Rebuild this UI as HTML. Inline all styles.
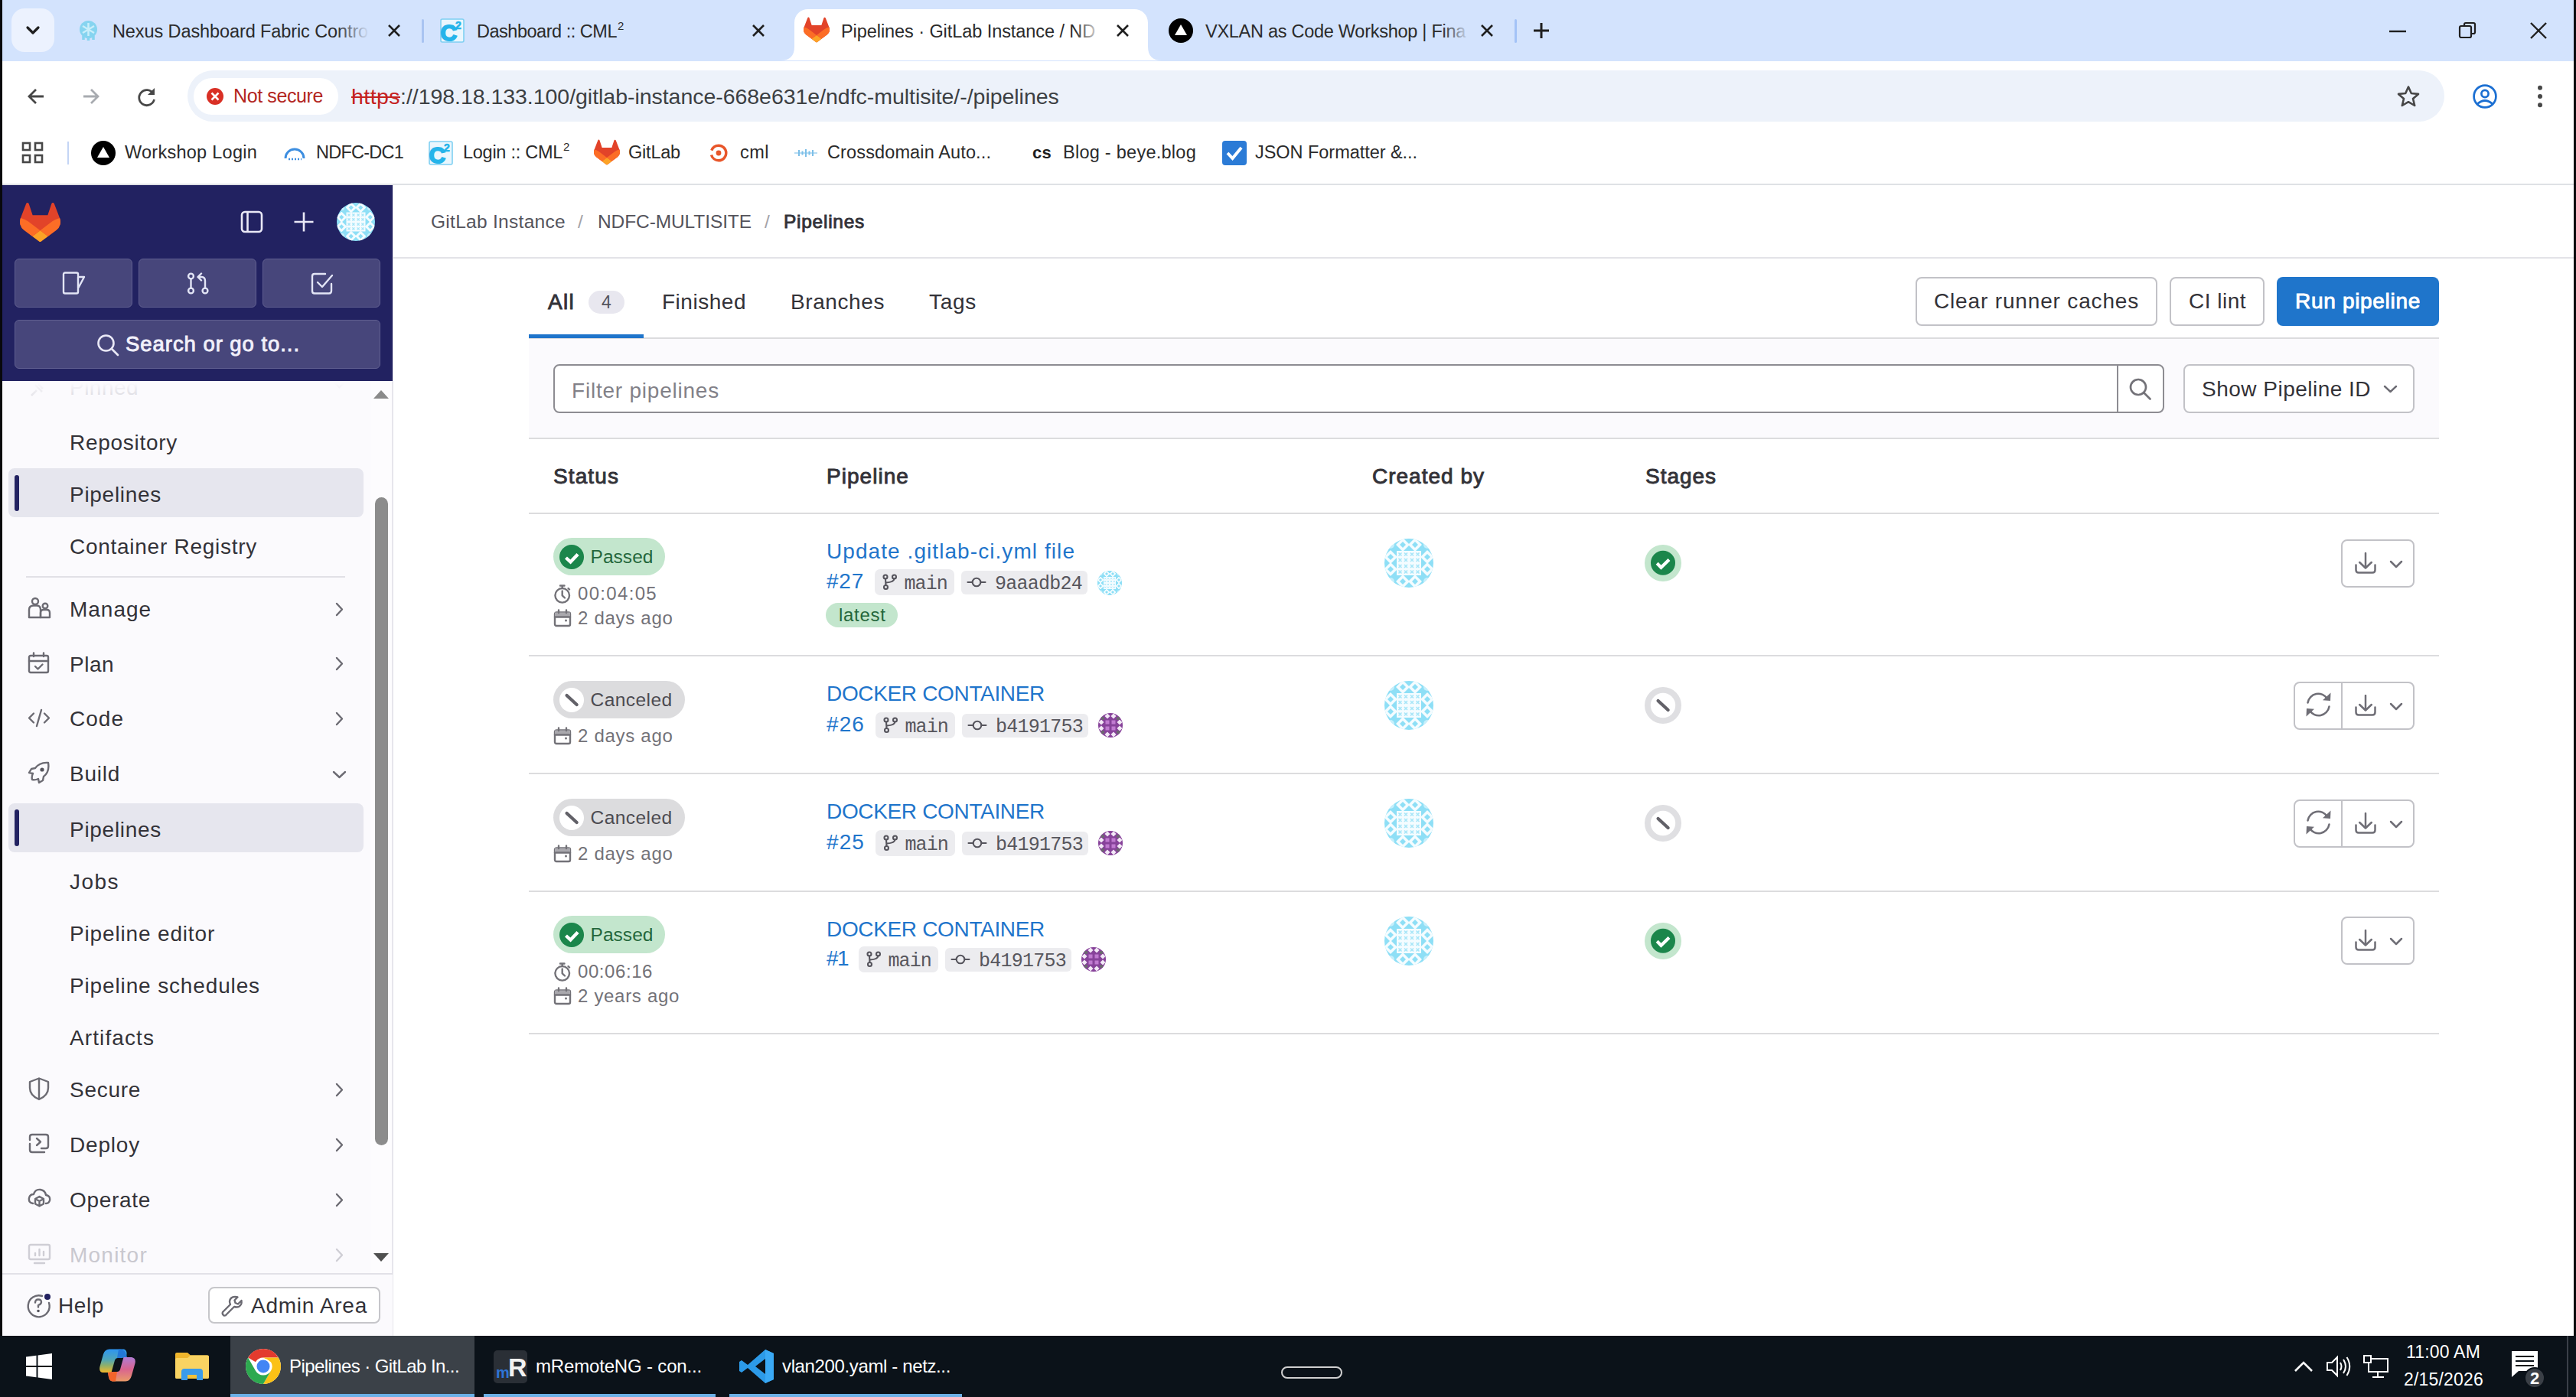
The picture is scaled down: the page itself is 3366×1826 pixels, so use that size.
<!DOCTYPE html>
<html><head><meta charset="utf-8"><title>Pipelines</title>
<style>
html,body{margin:0;padding:0;}
body{width:3366px;height:1826px;position:relative;overflow:hidden;background:#fff;font-family:"Liberation Sans",sans-serif;}
.b{position:absolute;display:block;}
.t{position:absolute;white-space:pre;}
</style></head><body>
<div class="b" style="left:0px;top:0px;width:3366px;height:79.5px;background:#d3e3fd;"></div>
<div class="b" style="left:0px;top:0px;width:3px;height:1746px;background:#08080c;"></div>
<div class="b" style="left:3363px;top:0px;width:3px;height:1746px;background:#08080c;"></div>
<div class="b" style="left:3px;top:79.5px;width:3360px;height:162.5px;background:#fff;border-radius:10px 11px 0 0;"></div>
<div class="b" style="left:15px;top:11px;width:56px;height:57px;background:#ecf2fe;border-radius:17px;"></div>
<svg class="b" style="left:31px;top:30px;" width="24" height="20" viewBox="0 0 24 20"><path d="M5 6 L12 13 L19 6" fill="none" stroke="#1f1f1f" stroke-width="3.2" stroke-linecap="round" stroke-linejoin="round"/></svg>
<svg class="b" style="left:1020px;top:12px" width="500" height="67" viewBox="0 0 500 67"><path d="M0 67 C12 67 18 61 18 49 L18 18 C18 7 26 0 36 0 L462 0 C472 0 480 7 480 18 L480 49 C480 61 486 67 498 67 Z" fill="#fff"/></svg>
<svg class="b" style="left:103px;top:27px;" width="25" height="26" viewBox="0 0 25 26"><circle cx="12.500" cy="11.500" r="11.500" fill="#86d4f0"/><path d="M5 7 L20 16 M20 7 L5 16 M12.500 3 L12.500 20" stroke="#c9eefa" stroke-width="2.500"/><path d="M6 20 L6 25 M12.500 22 L12.500 26 M19 20 L19 25" stroke="#86d4f0" stroke-width="3.500"/></svg>
<div class="t" style="left:147px;top:24.5px;font-size:23.5px;line-height:33px;color:#2b2b2b;letter-spacing:-0.1px;">Nexus Dashboard Fabric Contro</div>
<div class="b" style="left:440px;top:20px;width:50px;height:42px;background:linear-gradient(90deg,rgba(211,227,253,0),#d3e3fd 85%);"></div>
<svg class="b" style="left:506px;top:31px;" width="18" height="18" viewBox="0 0 18 18"><path d="M2 2 L16 16 M16 2 L2 16" fill="none" stroke="#1f1f1f" stroke-width="2.6"/></svg>
<div class="b" style="left:551px;top:25px;width:3px;height:31px;background:#a9c4f2;border-radius:2px;"></div>
<svg class="b" style="left:575px;top:24px;" width="32" height="32" viewBox="0 0 32 32"><rect x="1" y="1" width="30" height="30" rx="2" fill="#eaf6fd" stroke="#7fd0f2" stroke-width="1.600"/><text x="0.500" y="29" font-family="Liberation Sans" font-weight="700" font-size="30" fill="#25b4ea" stroke="#25b4ea" stroke-width="1.800">C</text><text x="20" y="14" font-family="Liberation Sans" font-weight="700" font-size="14" fill="#25b4ea" stroke="#25b4ea" stroke-width="0.600">2</text></svg>
<div class="t" style="left:623px;top:24.5px;font-size:23.5px;line-height:33px;color:#2b2b2b;letter-spacing:-0.48px;">Dashboard :: CML</div>
<div class="t" style="left:807px;top:22.5px;font-size:15px;line-height:21px;color:#2b2b2b;letter-spacing:2.66px;">2</div>
<svg class="b" style="left:982px;top:31px;" width="18" height="18" viewBox="0 0 18 18"><path d="M2 2 L16 16 M16 2 L2 16" fill="none" stroke="#1f1f1f" stroke-width="2.6"/></svg>
<svg class="b" style="left:1050px;top:22px;" width="34" height="34" viewBox="0 0 32 32"><path fill="#e24329" d="m31.46 12.780-.040-.120-4.350-11.350A1.140 1.140 0 0 0 25.940.600c-.240 0-.470.100-.660.240-.190.150-.330.360-.390.600l-2.940 9h-11.900l-2.940-9A1.140 1.140 0 0 0 6.070.580a1.150 1.150 0 0 0-1.140.720L.580 12.680l-.050.110a8.100 8.100 0 0 0 2.680 9.340l.020.010.040.030 6.630 4.970 3.280 2.480 2 1.520a1.350 1.350 0 0 0 1.620 0l2-1.520 3.280-2.480 6.670-5h.020a8.090 8.090 0 0 0 2.700-9.360Z"/><path fill="#fc6d26" d="m31.460 12.780-.040-.120a14.750 14.750 0 0 0-5.860 2.640l-9.550 7.240 6.090 4.600 6.670-5h.020a8.090 8.090 0 0 0 2.670-9.360Z"/><path fill="#fca326" d="m9.900 27.140 3.280 2.480 2 1.520a1.350 1.350 0 0 0 1.620 0l2-1.520 3.280-2.480-6.100-4.600-6.070 4.600Z"/><path fill="#fc6d26" d="M6.440 15.300a14.710 14.710 0 0 0-5.860-2.630l-.050.120a8.100 8.100 0 0 0 2.680 9.340l.020.010.040.030 6.630 4.970 6.100-4.600-9.560-7.240Z"/></svg>
<div class="t" style="left:1099px;top:24.5px;font-size:23.5px;line-height:33px;color:#2b2b2b;letter-spacing:-0.07px;">Pipelines · GitLab Instance / ND</div>
<div class="b" style="left:1405px;top:20px;width:35px;height:42px;background:linear-gradient(90deg,rgba(255,255,255,0),#fff);"></div>
<svg class="b" style="left:1458px;top:31px;" width="18" height="18" viewBox="0 0 18 18"><path d="M2 2 L16 16 M16 2 L2 16" fill="none" stroke="#1f1f1f" stroke-width="2.6"/></svg>
<svg class="b" style="left:1527px;top:24px;" width="32" height="32" viewBox="0 0 32 32"><circle cx="16" cy="16" r="16" fill="#000"/><path d="M16 8 L24 22 L8 22 Z" fill="#fff"/></svg>
<div class="t" style="left:1575px;top:24.5px;font-size:23.5px;line-height:33px;color:#2b2b2b;letter-spacing:-0.27px;">VXLAN as Code Workshop | Fina</div>
<div class="b" style="left:1885px;top:20px;width:35px;height:42px;background:linear-gradient(90deg,rgba(211,227,253,0),#d3e3fd);"></div>
<svg class="b" style="left:1934px;top:31px;" width="18" height="18" viewBox="0 0 18 18"><path d="M2 2 L16 16 M16 2 L2 16" fill="none" stroke="#1f1f1f" stroke-width="2.6"/></svg>
<div class="b" style="left:1979px;top:25px;width:3px;height:31px;background:#a3c3f7;border-radius:2px;"></div>
<svg class="b" style="left:2003px;top:29px;" width="22" height="22" viewBox="0 0 22 22"><path d="M11 1 L11 21 M1 11 L21 11" stroke="#1f1f1f" stroke-width="3"/></svg>
<svg class="b" style="left:3122px;top:38px;" width="22" height="6" viewBox="0 0 22 6"><path d="M0 3 L22 3" stroke="#1f1f1f" stroke-width="2.4"/></svg>
<svg class="b" style="left:3212px;top:27px;" width="26" height="26" viewBox="0 0 26 26"><rect x="2" y="7" width="15" height="15" rx="2" fill="none" stroke="#1f1f1f" stroke-width="2.2"/><path d="M8 7 L8 5 Q8 3 10 3 L20 3 Q22 3 22 5 L22 15 Q22 17 20 17 L17 17" fill="none" stroke="#1f1f1f" stroke-width="2.2"/></svg>
<svg class="b" style="left:3305px;top:28px;" width="24" height="24" viewBox="0 0 24 24"><path d="M2 2 L22 22 M22 2 L2 22" stroke="#1f1f1f" stroke-width="2.4"/></svg>
<svg class="b" style="left:35px;top:114px;" width="24" height="24" viewBox="0 0 24 24"><path d="M22 12 L3 12 M12 3 L3 12 L12 21" fill="none" stroke="#474747" stroke-width="2.8" stroke-linejoin="miter"/></svg>
<svg class="b" style="left:107px;top:114px;transform:scaleX(-1);" width="24" height="24" viewBox="0 0 24 24"><path d="M22 12 L3 12 M12 3 L3 12 L12 21" fill="none" stroke="#a8abb0" stroke-width="2.8" stroke-linejoin="miter"/></svg>
<svg class="b" style="left:178px;top:113px;" width="28" height="28" viewBox="0 0 28 28"><path d="M22 9 A10 10 0 1 0 23.5 17" fill="none" stroke="#474747" stroke-width="2.8"/><path d="M24 2 L24 11 L15 11 Z" fill="#474747"/></svg>
<div class="b" style="left:245px;top:92px;width:2949px;height:67px;background:#edf2fa;border-radius:34px;"></div>
<div class="b" style="left:253px;top:102px;width:189px;height:48px;background:#fff;border-radius:24px;"></div>
<svg class="b" style="left:269px;top:114px;" width="24" height="24" viewBox="0 0 24 24"><circle cx="12" cy="12" r="11" fill="#d93025"/><path d="M7.5 7.5 L16.5 16.5 M16.5 7.5 L7.5 16.5" stroke="#fff" stroke-width="2.6"/></svg>
<div class="t" style="left:305px;top:107.5px;font-size:25px;line-height:35px;color:#b3261e;letter-spacing:-0.39px;">Not secure</div>
<div class="t" style="left:459px;top:106.0px;font-size:28.5px;line-height:40px;color:#c5221f;letter-spacing:0.44px;text-decoration:line-through;text-decoration-thickness:2px;">https</div>
<div class="t" style="left:523px;top:106.0px;font-size:28.5px;line-height:40px;color:#3c4043;letter-spacing:-0.04px;">://198.18.133.100/gitlab-instance-668e631e/ndfc-multisite/-/pipelines</div>
<svg class="b" style="left:3131px;top:110px;" width="32" height="32" viewBox="0 0 32 32"><path d="M16 3.5 L19.8 12 L29 12.9 L22 19 L24.2 28 L16 23.2 L7.8 28 L10 19 L3 12.9 L12.2 12 Z" fill="none" stroke="#474747" stroke-width="2.6" stroke-linejoin="round"/></svg>
<svg class="b" style="left:3229px;top:108px;" width="36" height="36" viewBox="0 0 36 36"><circle cx="18" cy="18" r="14.400" fill="none" stroke="#1b6fd2" stroke-width="2.700"/><circle cx="18" cy="14.500" r="4.600" fill="none" stroke="#1b6fd2" stroke-width="2.700"/><path d="M8 28 Q18 19 28 28" fill="none" stroke="#1b6fd2" stroke-width="2.700"/></svg>
<svg class="b" style="left:3313px;top:108px;" width="12" height="38" viewBox="0 0 12 38"><circle cx="6" cy="6.800" r="3" fill="#474747"/><circle cx="6" cy="17.900" r="3" fill="#474747"/><circle cx="6" cy="29.200" r="3" fill="#474747"/></svg>
<svg class="b" style="left:28px;top:185px;" width="30" height="30" viewBox="0 0 30 30"><rect x="2" y="2" width="9" height="9" fill="none" stroke="#474747" stroke-width="2.6"/><rect x="2" y="18" width="9" height="9" fill="none" stroke="#474747" stroke-width="2.6"/><rect x="18" y="2" width="9" height="9" fill="none" stroke="#474747" stroke-width="2.6"/><rect x="18" y="18" width="9" height="9" fill="none" stroke="#474747" stroke-width="2.6"/></svg>
<div class="b" style="left:88px;top:185px;width:2px;height:30px;background:#c4d5f5;"></div>
<svg class="b" style="left:119px;top:184px;" width="32" height="32" viewBox="0 0 32 32"><circle cx="16" cy="16" r="16" fill="#000"/><path d="M16 8 L24 22 L8 22 Z" fill="#fff"/></svg>
<div class="t" style="left:163px;top:182.5px;font-size:23.5px;line-height:33px;color:#2b2b2b;letter-spacing:0.26px;">Workshop Login</div>
<svg class="b" style="left:370px;top:190px;" width="30" height="20" viewBox="0 0 30 20"><path d="M3 17 A12 12 0 0 1 27 17" fill="none" stroke="#3d8ee0" stroke-width="3"/><path d="M7 18 L24 18" stroke="#3d8ee0" stroke-width="2.5" stroke-dasharray="2 2"/></svg>
<div class="t" style="left:413px;top:182.5px;font-size:23.5px;line-height:33px;color:#2b2b2b;letter-spacing:-0.76px;">NDFC-DC1</div>
<svg class="b" style="left:560px;top:184px;" width="32" height="32" viewBox="0 0 32 32"><rect x="1" y="1" width="30" height="30" rx="2" fill="#eaf6fd" stroke="#7fd0f2" stroke-width="1.600"/><text x="0.500" y="29" font-family="Liberation Sans" font-weight="700" font-size="30" fill="#25b4ea" stroke="#25b4ea" stroke-width="1.800">C</text><text x="20" y="14" font-family="Liberation Sans" font-weight="700" font-size="14" fill="#25b4ea" stroke="#25b4ea" stroke-width="0.600">2</text></svg>
<div class="t" style="left:605px;top:182.5px;font-size:23.5px;line-height:33px;color:#2b2b2b;letter-spacing:-0.27px;">Login :: CML</div>
<div class="t" style="left:736px;top:180.5px;font-size:15px;line-height:21px;color:#2b2b2b;letter-spacing:1.66px;">2</div>
<svg class="b" style="left:776px;top:182px;" width="34" height="34" viewBox="0 0 32 32"><path fill="#e24329" d="m31.46 12.780-.040-.120-4.350-11.350A1.140 1.140 0 0 0 25.940.600c-.240 0-.470.100-.660.240-.190.150-.330.360-.390.600l-2.940 9h-11.900l-2.940-9A1.140 1.140 0 0 0 6.070.580a1.150 1.150 0 0 0-1.140.720L.580 12.680l-.050.110a8.100 8.100 0 0 0 2.680 9.340l.020.010.040.030 6.630 4.970 3.280 2.480 2 1.520a1.350 1.350 0 0 0 1.620 0l2-1.520 3.280-2.480 6.670-5h.020a8.090 8.090 0 0 0 2.700-9.360Z"/><path fill="#fc6d26" d="m31.460 12.780-.040-.120a14.750 14.750 0 0 0-5.860 2.640l-9.550 7.240 6.090 4.600 6.670-5h.020a8.090 8.090 0 0 0 2.670-9.360Z"/><path fill="#fca326" d="m9.900 27.140 3.280 2.480 2 1.520a1.350 1.350 0 0 0 1.620 0l2-1.520 3.280-2.480-6.100-4.600-6.070 4.600Z"/><path fill="#fc6d26" d="M6.440 15.300a14.710 14.710 0 0 0-5.860-2.630l-.050.120a8.100 8.100 0 0 0 2.680 9.340l.020.010.040.030 6.630 4.970 6.100-4.600-9.560-7.240Z"/></svg>
<div class="t" style="left:821px;top:182.5px;font-size:23.5px;line-height:33px;color:#2b2b2b;letter-spacing:-0.21px;">GitLab</div>
<svg class="b" style="left:925px;top:186px;" width="28" height="28" viewBox="0 0 28 28"><circle cx="14" cy="14" r="9.800" fill="none" stroke="#e8562a" stroke-width="3.400" stroke-dasharray="56 6" stroke-dashoffset="-34"/><circle cx="14" cy="14" r="3.400" fill="#e8562a"/></svg>
<div class="t" style="left:967px;top:182.5px;font-size:23.5px;line-height:33px;color:#2b2b2b;letter-spacing:0.48px;">cml</div>
<svg class="b" style="left:1036px;top:192px;" width="34" height="16" viewBox="0 0 34 16"><path d="M2 8 L32 8" stroke="#a5d4f0" stroke-width="1.600"/><path d="M8 4 L8 12 M12.500 5.500 L12.500 10.500 M17 3 L17 13 M21.500 5.500 L21.500 10.500 M26 4 L26 12" stroke="#7dbfe8" stroke-width="2"/></svg>
<div class="t" style="left:1081px;top:182.5px;font-size:23.5px;line-height:33px;color:#2b2b2b;letter-spacing:0.13px;">Crossdomain Auto...</div>
<div class="t" style="left:1349px;top:183.5px;font-size:22px;line-height:31px;color:#1f1f1f;letter-spacing:0.26px;font-weight:700;">cs</div>
<div class="t" style="left:1389px;top:182.5px;font-size:23.5px;line-height:33px;color:#2b2b2b;letter-spacing:0.26px;">Blog - beye.blog</div>
<svg class="b" style="left:1597px;top:184px;" width="32" height="32" viewBox="0 0 32 32"><rect x="0" y="0" width="32" height="32" rx="4" fill="#2b7bd6"/><path d="M7 16 L13.5 23 L25 9" fill="none" stroke="#fff" stroke-width="4"/></svg>
<div class="t" style="left:1640px;top:182.5px;font-size:23.5px;line-height:33px;color:#2b2b2b;letter-spacing:-0.04px;">JSON Formatter &amp;...</div>
<div class="b" style="left:3px;top:240px;width:3360px;height:2px;background:#dfe1e5;"></div>
<div class="b" style="left:3px;top:242px;width:510px;height:1504px;background:#fbfafd;"></div>
<div class="b" style="left:512px;top:242px;width:2px;height:1504px;background:#e7e6ec;"></div>
<div class="t" style="left:91px;top:486.5px;font-size:28px;line-height:39px;color:#d3d2d9;letter-spacing:0.47px;">Pinned</div>
<svg class="b" style="left:38px;top:498px;" width="22" height="22" viewBox="0 0 22 22"><path d="M3 19 L10 12 M8 5 L17 14 M12 4 L18 10" stroke="#dddce2" stroke-width="2.5" fill="none"/></svg>
<svg class="b" style="left:434px;top:497px;" width="19" height="12" viewBox="0 0 19 12"><path d="M2 2 L9.500 9 L17 2" fill="none" stroke="#e3e2e8" stroke-width="2.400"/></svg>
<div class="b" style="left:11px;top:498px;width:469px;height:26px;background:linear-gradient(180deg,#fbfafd 10%,rgba(251,250,253,0));"></div>
<div class="b" style="left:3px;top:242px;width:510px;height:256px;background:#222261;"></div>
<svg class="b" style="left:25.5px;top:264px;" width="53" height="53" viewBox="0 0 32 32"><path fill="#e24329" d="m31.46 12.780-.040-.120-4.350-11.350A1.140 1.140 0 0 0 25.940.600c-.240 0-.470.100-.660.240-.190.150-.330.360-.390.600l-2.940 9h-11.900l-2.940-9A1.140 1.140 0 0 0 6.070.580a1.150 1.150 0 0 0-1.140.720L.580 12.680l-.050.110a8.100 8.100 0 0 0 2.680 9.340l.020.010.040.030 6.630 4.970 3.280 2.480 2 1.520a1.350 1.350 0 0 0 1.620 0l2-1.520 3.280-2.480 6.670-5h.020a8.090 8.090 0 0 0 2.700-9.360Z"/><path fill="#fc6d26" d="m31.460 12.780-.040-.120a14.750 14.750 0 0 0-5.860 2.640l-9.550 7.240 6.090 4.600 6.670-5h.020a8.090 8.090 0 0 0 2.670-9.360Z"/><path fill="#fca326" d="m9.900 27.140 3.280 2.480 2 1.520a1.350 1.350 0 0 0 1.620 0l2-1.520 3.280-2.480-6.100-4.600-6.070 4.600Z"/><path fill="#fc6d26" d="M6.440 15.300a14.710 14.710 0 0 0-5.860-2.630l-.050.120a8.100 8.100 0 0 0 2.680 9.340l.020.010.040.030 6.630 4.970 6.100-4.600-9.560-7.240Z"/></svg>
<svg class="b" style="left:314px;top:275px;" width="30" height="30" viewBox="0 0 30 30"><rect x="2" y="2" width="26" height="26" rx="4" fill="none" stroke="#e9e8f6" stroke-width="2.6"/><path d="M9.500 2 L9.500 28" stroke="#e9e8f6" stroke-width="2.6"/></svg>
<svg class="b" style="left:384px;top:277px;" width="26" height="26" viewBox="0 0 26 26"><path d="M13 0.500 L13 25.500 M0.500 13 L25.500 13" stroke="#e9e8f6" stroke-width="2.6"/></svg>
<svg class="b" style="left:440px;top:265px;" width="50" height="50" viewBox="0 0 64 64"><defs><clipPath id="ca0"><circle cx="32" cy="32" r="32"/></clipPath></defs><g clip-path="url(#ca0)"><rect width="64" height="64" fill="#8edff6"/><path d="M24 0 L32 8 L24 16 L16 8 Z" fill="#f4fcff" stroke="#f4fcff" stroke-width="1.500" stroke-linejoin="round"/><path d="M24 4 L28 8 L24 12 L20 8 Z" fill="#8edff6"/><path d="M40 0 L48 8 L40 16 L32 8 Z" fill="#f4fcff" stroke="#f4fcff" stroke-width="1.500" stroke-linejoin="round"/><path d="M40 4 L44 8 L40 12 L36 8 Z" fill="#8edff6"/><path d="M24 48 L32 56 L24 64 L16 56 Z" fill="#f4fcff" stroke="#f4fcff" stroke-width="1.500" stroke-linejoin="round"/><path d="M24 52 L28 56 L24 60 L20 56 Z" fill="#8edff6"/><path d="M40 48 L48 56 L40 64 L32 56 Z" fill="#f4fcff" stroke="#f4fcff" stroke-width="1.500" stroke-linejoin="round"/><path d="M40 52 L44 56 L40 60 L36 56 Z" fill="#8edff6"/><path d="M8 16 L16 24 L8 32 L0 24 Z" fill="#f4fcff" stroke="#f4fcff" stroke-width="1.500" stroke-linejoin="round"/><path d="M8 20 L12 24 L8 28 L4 24 Z" fill="#8edff6"/><path d="M8 32 L16 40 L8 48 L0 40 Z" fill="#f4fcff" stroke="#f4fcff" stroke-width="1.500" stroke-linejoin="round"/><path d="M8 36 L12 40 L8 44 L4 40 Z" fill="#8edff6"/><path d="M56 16 L64 24 L56 32 L48 24 Z" fill="#f4fcff" stroke="#f4fcff" stroke-width="1.500" stroke-linejoin="round"/><path d="M56 20 L60 24 L56 28 L52 24 Z" fill="#8edff6"/><path d="M56 32 L64 40 L56 48 L48 40 Z" fill="#f4fcff" stroke="#f4fcff" stroke-width="1.500" stroke-linejoin="round"/><path d="M56 36 L60 40 L56 44 L52 40 Z" fill="#8edff6"/><circle cx="8" cy="8" r="5" fill="#f4fcff" opacity="0.55"/><circle cx="56" cy="8" r="5" fill="#f4fcff" opacity="0.55"/><circle cx="8" cy="56" r="5" fill="#f4fcff" opacity="0.55"/><circle cx="56" cy="56" r="5" fill="#f4fcff" opacity="0.55"/><rect x="16" y="16" width="32" height="32" fill="#f4fcff"/><path d="M18.5 18.5 L22.5 22.5 M22.5 18.5 L18.5 22.5" stroke="#8edff6" stroke-width="1.600" opacity="0.750"/><path d="M18.5 26 L22.5 30 M22.5 26 L18.5 30" stroke="#8edff6" stroke-width="1.600" opacity="0.750"/><path d="M18.5 34 L22.5 38 M22.5 34 L18.5 38" stroke="#8edff6" stroke-width="1.600" opacity="0.750"/><path d="M18.5 41.5 L22.5 45.5 M22.5 41.5 L18.5 45.5" stroke="#8edff6" stroke-width="1.600" opacity="0.750"/><path d="M26 18.5 L30 22.5 M30 18.5 L26 22.5" stroke="#8edff6" stroke-width="1.600" opacity="0.750"/><path d="M26 26 L30 30 M30 26 L26 30" stroke="#8edff6" stroke-width="1.600" opacity="0.750"/><path d="M26 34 L30 38 M30 34 L26 38" stroke="#8edff6" stroke-width="1.600" opacity="0.750"/><path d="M26 41.5 L30 45.5 M30 41.5 L26 45.5" stroke="#8edff6" stroke-width="1.600" opacity="0.750"/><path d="M34 18.5 L38 22.5 M38 18.5 L34 22.5" stroke="#8edff6" stroke-width="1.600" opacity="0.750"/><path d="M34 26 L38 30 M38 26 L34 30" stroke="#8edff6" stroke-width="1.600" opacity="0.750"/><path d="M34 34 L38 38 M38 34 L34 38" stroke="#8edff6" stroke-width="1.600" opacity="0.750"/><path d="M34 41.5 L38 45.5 M38 41.5 L34 45.5" stroke="#8edff6" stroke-width="1.600" opacity="0.750"/><path d="M41.5 18.5 L45.5 22.5 M45.5 18.5 L41.5 22.5" stroke="#8edff6" stroke-width="1.600" opacity="0.750"/><path d="M41.5 26 L45.5 30 M45.5 26 L41.5 30" stroke="#8edff6" stroke-width="1.600" opacity="0.750"/><path d="M41.5 34 L45.5 38 M45.5 34 L41.5 38" stroke="#8edff6" stroke-width="1.600" opacity="0.750"/><path d="M41.5 41.5 L45.5 45.5 M45.5 41.5 L41.5 45.5" stroke="#8edff6" stroke-width="1.600" opacity="0.750"/></g></svg>
<div class="b" style="left:19px;top:338px;width:154px;height:64px;background:#47467b;border:1px solid #605f90;box-sizing:border-box;border-radius:6px;"></div>
<div class="b" style="left:181px;top:338px;width:154px;height:64px;background:#47467b;border:1px solid #605f90;box-sizing:border-box;border-radius:6px;"></div>
<div class="b" style="left:343px;top:338px;width:154px;height:64px;background:#47467b;border:1px solid #605f90;box-sizing:border-box;border-radius:6px;"></div>
<svg class="b" style="left:80px;top:354px;" width="34" height="32" viewBox="0 0 34 32"><path d="M22 6 L22 4 Q22 2.5 20 2.5 L5 2.5 Q3 2.5 3 4.5 L3 27.5 Q3 29.500 5 29.500 L20 29.5 Q22 29.5 22 27.5 L22 24" fill="none" stroke="#e3e5f6" stroke-width="2.400" stroke-linejoin="round" stroke-linecap="round"/><path d="M22 8 L30 8 L22 23 Z" fill="none" stroke="#e3e5f6" stroke-width="2.400" stroke-linejoin="round" stroke-linecap="round"/></svg>
<svg class="b" style="left:244px;top:355.5px;" width="30" height="29" viewBox="0 0 30 29"><circle cx="5.500" cy="5" r="3.400" fill="none" stroke="#e3e5f6" stroke-width="2.400" stroke-linejoin="round" stroke-linecap="round"/><circle cx="5.500" cy="24" r="3.400" fill="none" stroke="#e3e5f6" stroke-width="2.400" stroke-linejoin="round" stroke-linecap="round"/><circle cx="24" cy="24" r="3.400" fill="none" stroke="#e3e5f6" stroke-width="2.400" stroke-linejoin="round" stroke-linecap="round"/><path d="M5.500 8.500 L5.500 20.500" fill="none" stroke="#e3e5f6" stroke-width="2.400" stroke-linejoin="round" stroke-linecap="round"/><path d="M24 20.500 L24 11 Q24 6 19.500 6 L15 6 M19 1.500 L14.500 6 L19 10.500" fill="none" stroke="#e3e5f6" stroke-width="2.400" stroke-linejoin="round" stroke-linecap="round"/></svg>
<svg class="b" style="left:405px;top:354px;" width="32" height="32" viewBox="0 0 32 32"><path d="M28 17 L28 26 Q28 29.500 25 29.500 L6 29.500 Q3 29.500 3 26.500 L3 7 Q3 4 6 4 L20 4" fill="none" stroke="#e3e5f6" stroke-width="2.400" stroke-linejoin="round" stroke-linecap="round"/><path d="M10 15 L16 21 L29 6" fill="none" stroke="#e3e5f6" stroke-width="2.400" stroke-linejoin="round" stroke-linecap="round"/></svg>
<div class="b" style="left:19px;top:418px;width:478px;height:64px;background:#47467b;border:1px solid #605f90;box-sizing:border-box;border-radius:6px;"></div>
<svg class="b" style="left:126px;top:436px;" width="30" height="30" viewBox="0 0 30 30"><circle cx="12.500" cy="12.500" r="10" fill="none" stroke="#e9e8f6" stroke-width="2.6"/><path d="M20 20 L28 28" stroke="#e9e8f6" stroke-width="2.6" stroke-linecap="round"/></svg>
<div class="t" style="left:164px;top:431.0px;font-size:27.5px;line-height:38px;color:#f1f0fa;letter-spacing:0.95px;-webkit-text-stroke:0.9px;">Search or go to...</div>
<div class="b" style="left:484px;top:498px;width:28px;height:1167px;background:#fdfcfe;"></div>
<svg class="b" style="left:487px;top:508px;" width="22" height="14" viewBox="0 0 22 14"><path d="M1 13 L11 2 L21 13 Z" fill="#8a8a8a"/></svg>
<svg class="b" style="left:487px;top:1637px;" width="22" height="14" viewBox="0 0 22 14"><path d="M1 1 L11 12 L21 1 Z" fill="#505050"/></svg>
<div class="b" style="left:490px;top:650px;width:17px;height:847px;background:#8c8c8c;border-radius:9px;"></div>
<div class="t" style="left:91px;top:559.0px;font-size:28px;line-height:39px;color:#333238;letter-spacing:0.72px;">Repository</div>
<div class="b" style="left:11px;top:612px;width:464px;height:64px;background:#e6e6ee;border-radius:8px;"></div>
<div class="b" style="left:19px;top:621px;width:6px;height:47px;background:#222261;border-radius:3px;"></div>
<div class="t" style="left:91px;top:627.0px;font-size:28px;line-height:39px;color:#333238;letter-spacing:0.71px;">Pipelines</div>
<div class="t" style="left:91px;top:694.5px;font-size:28px;line-height:39px;color:#333238;letter-spacing:0.73px;">Container Registry</div>
<div class="b" style="left:34px;top:753px;width:417px;height:2px;background:#e1e0e6;"></div>
<svg class="b" style="left:36px;top:779.9px;" width="31" height="31" viewBox="0 0 31 31"><circle cx="10" cy="6" r="4" fill="none" stroke="#6c6b73" stroke-width="2.4" stroke-linejoin="round" stroke-linecap="round"/><path d="M2 27 L2 17 Q2 11.500 8 11.500 L12 11.500 Q17 11.500 17 17 L17 27 Z" fill="none" stroke="#6c6b73" stroke-width="2.4" stroke-linejoin="round" stroke-linecap="round"/><circle cx="23" cy="12" r="3.300" fill="none" stroke="#6c6b73" stroke-width="2.4" stroke-linejoin="round" stroke-linecap="round"/><path d="M17 27 L17 21 Q17 17 21 17 L25 17 Q29 17 29 21 L29 27 Z" fill="none" stroke="#6c6b73" stroke-width="2.4" stroke-linejoin="round" stroke-linecap="round"/></svg>
<div class="t" style="left:91px;top:776.8px;font-size:28px;line-height:39px;color:#333238;letter-spacing:0.97px;">Manage</div>
<svg class="b" style="left:438px;top:787px;" width="12" height="19" viewBox="0 0 12 19"><path d="M2 2 L9 9.500 L2 17" fill="none" stroke="#6c6b73" stroke-width="2.4" stroke-linejoin="round" stroke-linecap="round"/></svg>
<svg class="b" style="left:36px;top:851.6px;" width="31" height="31" viewBox="0 0 31 31"><rect x="2" y="5" width="25" height="22" rx="2" fill="none" stroke="#6c6b73" stroke-width="2.4" stroke-linejoin="round" stroke-linecap="round"/><path d="M2 12 L27 12 M8 1.500 L8 6 M21 1.500 L21 6" fill="none" stroke="#6c6b73" stroke-width="2.4" stroke-linejoin="round" stroke-linecap="round"/><path d="M10 19 L13.500 22.500 L19.500 16.500" fill="none" stroke="#6c6b73" stroke-width="2.4" stroke-linejoin="round" stroke-linecap="round"/></svg>
<div class="t" style="left:91px;top:848.5px;font-size:28px;line-height:39px;color:#333238;letter-spacing:0.49px;">Plan</div>
<svg class="b" style="left:438px;top:858px;" width="12" height="19" viewBox="0 0 12 19"><path d="M2 2 L9 9.500 L2 17" fill="none" stroke="#6c6b73" stroke-width="2.4" stroke-linejoin="round" stroke-linecap="round"/></svg>
<svg class="b" style="left:36px;top:923.4px;" width="31" height="31" viewBox="0 0 31 31"><path d="M8 9.500 L2 15.500 L8 21.500 M22 9.500 L28 15.500 L22 21.500 M18 5 L12 26" fill="none" stroke="#6c6b73" stroke-width="2.4" stroke-linejoin="round" stroke-linecap="round"/></svg>
<div class="t" style="left:91px;top:920.3px;font-size:28px;line-height:39px;color:#333238;letter-spacing:1.02px;">Code</div>
<svg class="b" style="left:438px;top:930px;" width="12" height="19" viewBox="0 0 12 19"><path d="M2 2 L9 9.500 L2 17" fill="none" stroke="#6c6b73" stroke-width="2.4" stroke-linejoin="round" stroke-linecap="round"/></svg>
<svg class="b" style="left:36px;top:995.2px;" width="31" height="31" viewBox="0 0 31 31"><path d="M27 2 Q16 1 10 9 L5 10 L2 15 L7 16 Q5 20 6 24 Q10 25 14 23 L15 28 L20 25 L21 20 Q29 14 27 2 Z" fill="none" stroke="#6c6b73" stroke-width="2.4" stroke-linejoin="round" stroke-linecap="round"/><circle cx="19" cy="11" r="2.600" fill="#55545c"/></svg>
<div class="t" style="left:91px;top:992.1px;font-size:28px;line-height:39px;color:#333238;letter-spacing:0.75px;">Build</div>
<svg class="b" style="left:434px;top:1007px;" width="19" height="12" viewBox="0 0 19 12"><path d="M2 2 L9.500 9 L17 2" fill="none" stroke="#6c6b73" stroke-width="2.4" stroke-linejoin="round" stroke-linecap="round"/></svg>
<div class="b" style="left:11px;top:1050px;width:464px;height:64px;background:#e6e6ee;border-radius:8px;"></div>
<div class="b" style="left:19px;top:1058px;width:6px;height:48px;background:#222261;border-radius:3px;"></div>
<div class="t" style="left:91px;top:1064.8px;font-size:28px;line-height:39px;color:#333238;letter-spacing:0.71px;">Pipelines</div>
<div class="t" style="left:91px;top:1132.7px;font-size:28px;line-height:39px;color:#333238;letter-spacing:1.46px;">Jobs</div>
<div class="t" style="left:91px;top:1200.9px;font-size:28px;line-height:39px;color:#333238;letter-spacing:0.84px;">Pipeline editor</div>
<div class="t" style="left:91px;top:1268.7px;font-size:28px;line-height:39px;color:#333238;letter-spacing:0.86px;">Pipeline schedules</div>
<div class="t" style="left:91px;top:1336.7px;font-size:28px;line-height:39px;color:#333238;letter-spacing:1.1px;">Artifacts</div>
<svg class="b" style="left:36px;top:1407.9px;" width="31" height="31" viewBox="0 0 31 31"><path d="M15 1.500 L27 6 L27 14 Q27 24 15 29 Q3 24 3 14 L3 6 Z" fill="none" stroke="#6c6b73" stroke-width="2.4" stroke-linejoin="round" stroke-linecap="round"/><path d="M15 2 L15 28" fill="none" stroke="#6c6b73" stroke-width="2.4" stroke-linejoin="round" stroke-linecap="round"/></svg>
<div class="t" style="left:91px;top:1404.8px;font-size:28px;line-height:39px;color:#333238;letter-spacing:0.71px;">Secure</div>
<svg class="b" style="left:438px;top:1415px;" width="12" height="19" viewBox="0 0 12 19"><path d="M2 2 L9 9.500 L2 17" fill="none" stroke="#6c6b73" stroke-width="2.4" stroke-linejoin="round" stroke-linecap="round"/></svg>
<svg class="b" style="left:36px;top:1479.9px;" width="31" height="31" viewBox="0 0 31 31"><path d="M3 10 L3 6 Q3 3 6 3 L24 3 Q27 3 27 6 L27 18 Q27 21 24 21 L18 21" fill="none" stroke="#6c6b73" stroke-width="2.4" stroke-linejoin="round" stroke-linecap="round"/><path d="M12 8 L17 12.500 L12 17" fill="none" stroke="#6c6b73" stroke-width="2.4" stroke-linejoin="round" stroke-linecap="round"/><path d="M3 15 L3 23 Q3 26 6 26 L22 26" fill="none" stroke="#6c6b73" stroke-width="2.4" stroke-linejoin="round" stroke-linecap="round"/></svg>
<div class="t" style="left:91px;top:1476.8px;font-size:28px;line-height:39px;color:#333238;letter-spacing:0.8px;">Deploy</div>
<svg class="b" style="left:438px;top:1487px;" width="12" height="19" viewBox="0 0 12 19"><path d="M2 2 L9 9.500 L2 17" fill="none" stroke="#6c6b73" stroke-width="2.4" stroke-linejoin="round" stroke-linecap="round"/></svg>
<svg class="b" style="left:36px;top:1551.9px;" width="31" height="31" viewBox="0 0 31 31"><path d="M7 21 Q1 20 2 14 Q3 9 8 9 Q10 2 17 3 Q23 4 24 10 Q30 11 29 17 Q28 21 24 21" fill="none" stroke="#6c6b73" stroke-width="2.4" stroke-linejoin="round" stroke-linecap="round"/><path d="M15.500 12 L21 15 L21 21.500 L15.500 24.500 L10 21.500 L10 15 Z M10 15 L15.500 18 L21 15 M15.500 18 L15.500 24.500" fill="none" stroke="#6c6b73" stroke-width="2.4" stroke-linejoin="round" stroke-linecap="round"/></svg>
<div class="t" style="left:91px;top:1548.8px;font-size:28px;line-height:39px;color:#333238;letter-spacing:0.69px;">Operate</div>
<svg class="b" style="left:438px;top:1559px;" width="12" height="19" viewBox="0 0 12 19"><path d="M2 2 L9 9.500 L2 17" fill="none" stroke="#6c6b73" stroke-width="2.4" stroke-linejoin="round" stroke-linecap="round"/></svg>
<svg class="b" style="left:36px;top:1623.9px;" width="31" height="31" viewBox="0 0 31 31"><rect x="2" y="3" width="27" height="19" rx="2" fill="none" stroke="#cfced5" stroke-width="2.4" stroke-linejoin="round" stroke-linecap="round"/><path d="M9 27 L22 27 M10 17 L10 14 M15.500 17 L15.500 9 M21 17 L21 12" fill="none" stroke="#cfced5" stroke-width="2.4" stroke-linejoin="round" stroke-linecap="round"/></svg>
<div class="t" style="left:91px;top:1620.8px;font-size:28px;line-height:39px;color:#c9c8cf;letter-spacing:1.23px;">Monitor</div>
<svg class="b" style="left:438px;top:1631px;" width="12" height="19" viewBox="0 0 12 19"><path d="M2 2 L9 9.500 L2 17" fill="none" stroke="#cfced5" stroke-width="2.4" stroke-linejoin="round" stroke-linecap="round"/></svg>
<div class="b" style="left:3px;top:1664px;width:510px;height:2px;background:#e2e1e8;"></div>
<div class="b" style="left:3px;top:1666px;width:510px;height:80px;background:#fbfafd;"></div>
<svg class="b" style="left:34px;top:1690px;" width="34" height="34" viewBox="0 0 34 34"><path d="M30 13 A14 14 0 1 1 21 4" fill="none" stroke="#6c6b73" stroke-width="2.4" stroke-linejoin="round" stroke-linecap="round"/><path d="M12 12.500 Q12 8.500 16 8.500 Q20 8.500 20 12 Q20 14.500 16 16 L16 18.500" fill="none" stroke="#6c6b73" stroke-width="2.4" stroke-linejoin="round" stroke-linecap="round"/><circle cx="16" cy="23.500" r="1.800" fill="#55545c"/><circle cx="28" cy="5" r="4" fill="#232160"/></svg>
<div class="t" style="left:76px;top:1686.5px;font-size:28px;line-height:39px;color:#333238;letter-spacing:0.6px;">Help</div>
<div class="b" style="left:272px;top:1682px;width:225px;height:48px;background:#fff;border:2px solid #c6c6ca;box-sizing:border-box;border-radius:8px;"></div>
<svg class="b" style="left:288px;top:1692px;" width="30" height="30" viewBox="0 0 30 30"><path d="M19 3 Q13 3 12 9 Q12 11 13 13 L3 23 Q2 26 4.500 27.500 Q7 28 8 26 L18 16 Q24 18 27 13 Q28 11 27.500 8 L23 12.500 L19.500 11 L18.500 7.500 L22.500 3.500 Q21 3 19 3 Z" fill="none" stroke="#6c6b73" stroke-width="2.4" stroke-linejoin="round" stroke-linecap="round"/></svg>
<div class="t" style="left:328px;top:1686.5px;font-size:28px;line-height:39px;color:#333238;letter-spacing:0.72px;">Admin Area</div>
<div class="t" style="left:563px;top:273.0px;font-size:24.5px;line-height:34px;color:#55545c;letter-spacing:0.29px;">GitLab Instance</div>
<div class="t" style="left:755px;top:273.0px;font-size:24.5px;line-height:34px;color:#a4a3a8;letter-spacing:2.19px;">/</div>
<div class="t" style="left:781px;top:273.0px;font-size:24.5px;line-height:34px;color:#55545c;letter-spacing:-0.1px;">NDFC-MULTISITE</div>
<div class="t" style="left:999px;top:273.0px;font-size:24.5px;line-height:34px;color:#a4a3a8;letter-spacing:2.19px;">/</div>
<div class="t" style="left:1024px;top:273.0px;font-size:24.5px;line-height:34px;color:#333238;letter-spacing:0.73px;-webkit-text-stroke:0.9px;">Pipelines</div>
<div class="b" style="left:514px;top:336px;width:2849px;height:2px;background:#e3e3e8;"></div>
<div class="t" style="left:716px;top:374.5px;font-size:28px;line-height:39px;color:#333238;letter-spacing:1.29px;-webkit-text-stroke:0.9px;">All</div>
<div class="b" style="left:769px;top:380px;width:47px;height:30px;background:#e8e7ef;border-radius:15px;"></div>
<div class="t" style="left:786px;top:379.0px;font-size:23px;line-height:32px;color:#55545c;letter-spacing:0.2px;">4</div>
<div class="t" style="left:865px;top:374.5px;font-size:28px;line-height:39px;color:#333238;letter-spacing:0.52px;">Finished</div>
<div class="t" style="left:1033px;top:374.5px;font-size:28px;line-height:39px;color:#333238;letter-spacing:0.59px;">Branches</div>
<div class="t" style="left:1214px;top:374.5px;font-size:28px;line-height:39px;color:#333238;letter-spacing:0.71px;">Tags</div>
<div class="b" style="left:691px;top:441px;width:2496px;height:2px;background:#dcdcde;"></div>
<div class="b" style="left:691px;top:437px;width:150px;height:5px;background:#1f75cb;"></div>
<div class="b" style="left:2503px;top:362px;width:316px;height:64px;background:#fff;border:2px solid #c2c2c7;box-sizing:border-box;border-radius:8px;"></div>
<div class="t" style="left:2527px;top:373.9px;font-size:28px;line-height:39px;color:#333238;letter-spacing:0.84px;">Clear runner caches</div>
<div class="b" style="left:2835px;top:362px;width:124px;height:64px;background:#fff;border:2px solid #c2c2c7;box-sizing:border-box;border-radius:8px;"></div>
<div class="t" style="left:2860px;top:373.9px;font-size:28px;line-height:39px;color:#333238;letter-spacing:0.49px;">CI lint</div>
<div class="b" style="left:2975px;top:362px;width:212px;height:64px;background:#1f75cb;border-radius:8px;"></div>
<div class="t" style="left:2999px;top:373.9px;font-size:28px;line-height:39px;color:#fff;letter-spacing:0.69px;-webkit-text-stroke:0.9px;">Run pipeline</div>
<div class="b" style="left:691px;top:443px;width:2496px;height:129px;background:#fbfafd;"></div>
<div class="b" style="left:691px;top:572px;width:2496px;height:2px;background:#dcdcde;"></div>
<div class="b" style="left:723px;top:476px;width:2105px;height:64px;background:#fff;border:2px solid #8d8c92;box-sizing:border-box;border-radius:8px;"></div>
<div class="b" style="left:2765.5px;top:476px;width:2.0px;height:64px;background:#8d8c92;"></div>
<div class="t" style="left:747px;top:490.5px;font-size:28px;line-height:39px;color:#828188;letter-spacing:0.78px;">Filter pipelines</div>
<svg class="b" style="left:2781px;top:493px;" width="32" height="32" viewBox="0 0 32 32"><circle cx="13" cy="13" r="10" fill="none" stroke="#737278" stroke-width="2.700"/><path d="M20.500 20.500 L28.500 28.500" stroke="#737278" stroke-width="2.700" stroke-linecap="round"/></svg>
<div class="b" style="left:2853px;top:476px;width:302px;height:64px;background:#fff;border:2px solid #c2c2c7;box-sizing:border-box;border-radius:8px;"></div>
<div class="t" style="left:2877px;top:488.5px;font-size:28px;line-height:39px;color:#333238;letter-spacing:0.49px;">Show Pipeline ID</div>
<svg class="b" style="left:3114px;top:503px;" width="19" height="12" viewBox="0 0 19 12"><path d="M2 2 L9.500 9 L17 2" fill="none" stroke="#6c6b73" stroke-width="2.4" stroke-linejoin="round" stroke-linecap="round"/></svg>
<div class="t" style="left:723px;top:602.5px;font-size:28px;line-height:39px;color:#333238;letter-spacing:1.1px;-webkit-text-stroke:0.9px;">Status</div>
<div class="t" style="left:1080px;top:602.5px;font-size:28px;line-height:39px;color:#333238;letter-spacing:1.04px;-webkit-text-stroke:0.9px;">Pipeline</div>
<div class="t" style="left:1793px;top:602.5px;font-size:28px;line-height:39px;color:#333238;letter-spacing:1.0px;-webkit-text-stroke:0.9px;">Created by</div>
<div class="t" style="left:2150px;top:602.5px;font-size:28px;line-height:39px;color:#333238;letter-spacing:0.97px;-webkit-text-stroke:0.9px;">Stages</div>
<div class="b" style="left:691px;top:670px;width:2496px;height:2px;background:#dcdcde;"></div>
<div class="b" style="left:691px;top:856px;width:2496px;height:2px;background:#dcdcde;"></div>
<div class="b" style="left:691px;top:1010px;width:2496px;height:2px;background:#dcdcde;"></div>
<div class="b" style="left:691px;top:1164px;width:2496px;height:2px;background:#dcdcde;"></div>
<div class="b" style="left:691px;top:1350px;width:2496px;height:2px;background:#dcdcde;"></div>
<div class="b" style="left:723px;top:703px;width:146px;height:49px;background:#c3e6cd;border-radius:25px;"></div>
<svg class="b" style="left:731px;top:711.5px;" width="32" height="32" viewBox="0 0 32 32"><circle cx="16" cy="16" r="16" fill="#1b864b"/><path d="M8.500 17 L14.500 22.500 L24 12.500" fill="none" stroke="#fff" stroke-width="4.4" stroke-linejoin="miter"/></svg>
<div class="t" style="left:771.5px;top:710.5px;font-size:24.5px;line-height:34px;color:#24663b;letter-spacing:0.05px;">Passed</div>
<svg class="b" style="left:723px;top:764px;" width="24" height="26" viewBox="0 0 24 26"><circle cx="11.700" cy="14.300" r="9.300" fill="none" stroke="#737278" stroke-width="2.4" stroke-linejoin="round" stroke-linecap="round"/><path d="M11.700 8.500 L11.700 14.300 L15 17.500 M9 1.500 L14.500 1.500 M11.700 1.500 L11.700 4.500 M19.500 5 L21 6.500" fill="none" stroke="#737278" stroke-width="2.4" stroke-linejoin="round" stroke-linecap="round"/></svg>
<div class="t" style="left:755px;top:758.5px;font-size:24px;line-height:34px;color:#737278;letter-spacing:1.32px;">00:04:05</div>
<svg class="b" style="left:723px;top:796px;" width="24" height="24" viewBox="0 0 24 24"><rect x="2" y="4.500" width="20" height="17.500" rx="2" fill="none" stroke="#737278" stroke-width="2.4" stroke-linejoin="round" stroke-linecap="round"/><rect x="2" y="4.500" width="20" height="5.500" fill="#a9a8ad"/><path d="M2 10.500 L22 10.500 M7 1.500 L7 5 M17 1.500 L17 5" fill="none" stroke="#737278" stroke-width="2.4" stroke-linejoin="round" stroke-linecap="round"/><circle cx="16.500" cy="15" r="1.500" fill="#737278"/></svg>
<div class="t" style="left:755px;top:790.5px;font-size:24px;line-height:34px;color:#737278;letter-spacing:0.71px;">2 days ago</div>
<div class="t" style="left:1080px;top:700.5px;font-size:28px;line-height:39px;color:#1f75cb;letter-spacing:1.07px;">Update .gitlab-ci.yml file</div>
<div class="t" style="left:1080px;top:740.2px;font-size:28px;line-height:39px;color:#1f75cb;letter-spacing:0.76px;">#27</div>
<div class="b" style="left:1143px;top:744px;width:104px;height:34px;background:#ececef;border-radius:7px;"></div>
<svg class="b" style="left:1153px;top:750px;" width="20" height="22" viewBox="0 0 20 22"><circle cx="4" cy="4" r="2.500" fill="none" stroke="#55545c" stroke-width="2.1" stroke-linejoin="round" stroke-linecap="round"/><circle cx="4.500" cy="17.500" r="2.500" fill="none" stroke="#55545c" stroke-width="2.1" stroke-linejoin="round" stroke-linecap="round"/><circle cx="15.500" cy="4" r="2.500" fill="none" stroke="#55545c" stroke-width="2.1" stroke-linejoin="round" stroke-linecap="round"/><path d="M4 6.500 L4.500 15 M15.500 6.500 Q15 11 5 11.500" fill="none" stroke="#55545c" stroke-width="2.1" stroke-linejoin="round" stroke-linecap="round"/></svg>
<div class="t" style="left:1181.5px;top:745.7px;font-size:25px;line-height:35px;color:#57565d;letter-spacing:-0.88px;font-family:'Liberation Mono', monospace;">main</div>
<div class="b" style="left:1256px;top:746px;width:165px;height:31px;background:#ececef;border-radius:6px;"></div>
<svg class="b" style="left:1263px;top:753px;" width="26" height="16" viewBox="0 0 26 16"><circle cx="13" cy="8" r="5.300" fill="none" stroke="#55545c" stroke-width="2.1" stroke-linejoin="round" stroke-linecap="round"/><path d="M1.500 8 L7.500 8 M18.500 8 L24.500 8" fill="none" stroke="#55545c" stroke-width="2.1" stroke-linejoin="round" stroke-linecap="round"/></svg>
<div class="t" style="left:1300px;top:745.7px;font-size:25px;line-height:35px;color:#57565d;letter-spacing:-0.75px;font-family:'Liberation Mono', monospace;">9aaadb24</div>
<svg class="b" style="left:1433.5px;top:745.5px;" width="32" height="32" viewBox="0 0 64 64"><defs><clipPath id="cr1"><circle cx="32" cy="32" r="32"/></clipPath></defs><g clip-path="url(#cr1)"><rect width="64" height="64" fill="#8edff6"/><path d="M24 0 L32 8 L24 16 L16 8 Z" fill="#f4fcff" stroke="#f4fcff" stroke-width="1.500" stroke-linejoin="round"/><path d="M24 4 L28 8 L24 12 L20 8 Z" fill="#8edff6"/><path d="M40 0 L48 8 L40 16 L32 8 Z" fill="#f4fcff" stroke="#f4fcff" stroke-width="1.500" stroke-linejoin="round"/><path d="M40 4 L44 8 L40 12 L36 8 Z" fill="#8edff6"/><path d="M24 48 L32 56 L24 64 L16 56 Z" fill="#f4fcff" stroke="#f4fcff" stroke-width="1.500" stroke-linejoin="round"/><path d="M24 52 L28 56 L24 60 L20 56 Z" fill="#8edff6"/><path d="M40 48 L48 56 L40 64 L32 56 Z" fill="#f4fcff" stroke="#f4fcff" stroke-width="1.500" stroke-linejoin="round"/><path d="M40 52 L44 56 L40 60 L36 56 Z" fill="#8edff6"/><path d="M8 16 L16 24 L8 32 L0 24 Z" fill="#f4fcff" stroke="#f4fcff" stroke-width="1.500" stroke-linejoin="round"/><path d="M8 20 L12 24 L8 28 L4 24 Z" fill="#8edff6"/><path d="M8 32 L16 40 L8 48 L0 40 Z" fill="#f4fcff" stroke="#f4fcff" stroke-width="1.500" stroke-linejoin="round"/><path d="M8 36 L12 40 L8 44 L4 40 Z" fill="#8edff6"/><path d="M56 16 L64 24 L56 32 L48 24 Z" fill="#f4fcff" stroke="#f4fcff" stroke-width="1.500" stroke-linejoin="round"/><path d="M56 20 L60 24 L56 28 L52 24 Z" fill="#8edff6"/><path d="M56 32 L64 40 L56 48 L48 40 Z" fill="#f4fcff" stroke="#f4fcff" stroke-width="1.500" stroke-linejoin="round"/><path d="M56 36 L60 40 L56 44 L52 40 Z" fill="#8edff6"/><circle cx="8" cy="8" r="5" fill="#f4fcff" opacity="0.55"/><circle cx="56" cy="8" r="5" fill="#f4fcff" opacity="0.55"/><circle cx="8" cy="56" r="5" fill="#f4fcff" opacity="0.55"/><circle cx="56" cy="56" r="5" fill="#f4fcff" opacity="0.55"/><rect x="16" y="16" width="32" height="32" fill="#f4fcff"/><path d="M18.5 18.5 L22.5 22.5 M22.5 18.5 L18.5 22.5" stroke="#8edff6" stroke-width="1.600" opacity="0.750"/><path d="M18.5 26 L22.5 30 M22.5 26 L18.5 30" stroke="#8edff6" stroke-width="1.600" opacity="0.750"/><path d="M18.5 34 L22.5 38 M22.5 34 L18.5 38" stroke="#8edff6" stroke-width="1.600" opacity="0.750"/><path d="M18.5 41.5 L22.5 45.5 M22.5 41.5 L18.5 45.5" stroke="#8edff6" stroke-width="1.600" opacity="0.750"/><path d="M26 18.5 L30 22.5 M30 18.5 L26 22.5" stroke="#8edff6" stroke-width="1.600" opacity="0.750"/><path d="M26 26 L30 30 M30 26 L26 30" stroke="#8edff6" stroke-width="1.600" opacity="0.750"/><path d="M26 34 L30 38 M30 34 L26 38" stroke="#8edff6" stroke-width="1.600" opacity="0.750"/><path d="M26 41.5 L30 45.5 M30 41.5 L26 45.5" stroke="#8edff6" stroke-width="1.600" opacity="0.750"/><path d="M34 18.5 L38 22.5 M38 18.5 L34 22.5" stroke="#8edff6" stroke-width="1.600" opacity="0.750"/><path d="M34 26 L38 30 M38 26 L34 30" stroke="#8edff6" stroke-width="1.600" opacity="0.750"/><path d="M34 34 L38 38 M38 34 L34 38" stroke="#8edff6" stroke-width="1.600" opacity="0.750"/><path d="M34 41.5 L38 45.5 M38 41.5 L34 45.5" stroke="#8edff6" stroke-width="1.600" opacity="0.750"/><path d="M41.5 18.5 L45.5 22.5 M45.5 18.5 L41.5 22.5" stroke="#8edff6" stroke-width="1.600" opacity="0.750"/><path d="M41.5 26 L45.5 30 M45.5 26 L41.5 30" stroke="#8edff6" stroke-width="1.600" opacity="0.750"/><path d="M41.5 34 L45.5 38 M45.5 34 L41.5 38" stroke="#8edff6" stroke-width="1.600" opacity="0.750"/><path d="M41.5 41.5 L45.5 45.5 M45.5 41.5 L41.5 45.5" stroke="#8edff6" stroke-width="1.600" opacity="0.750"/></g></svg>
<div class="b" style="left:1079px;top:788px;width:94px;height:32px;background:#c3e6cd;border-radius:16px;"></div>
<div class="t" style="left:1096px;top:786.7px;font-size:24px;line-height:34px;color:#24663b;letter-spacing:0.69px;">latest</div>
<svg class="b" style="left:1809px;top:704px;" width="64" height="64" viewBox="0 0 64 64"><defs><clipPath id="cu1"><circle cx="32" cy="32" r="32"/></clipPath></defs><g clip-path="url(#cu1)"><rect width="64" height="64" fill="#8edff6"/><path d="M24 0 L32 8 L24 16 L16 8 Z" fill="#f4fcff" stroke="#f4fcff" stroke-width="1.500" stroke-linejoin="round"/><path d="M24 4 L28 8 L24 12 L20 8 Z" fill="#8edff6"/><path d="M40 0 L48 8 L40 16 L32 8 Z" fill="#f4fcff" stroke="#f4fcff" stroke-width="1.500" stroke-linejoin="round"/><path d="M40 4 L44 8 L40 12 L36 8 Z" fill="#8edff6"/><path d="M24 48 L32 56 L24 64 L16 56 Z" fill="#f4fcff" stroke="#f4fcff" stroke-width="1.500" stroke-linejoin="round"/><path d="M24 52 L28 56 L24 60 L20 56 Z" fill="#8edff6"/><path d="M40 48 L48 56 L40 64 L32 56 Z" fill="#f4fcff" stroke="#f4fcff" stroke-width="1.500" stroke-linejoin="round"/><path d="M40 52 L44 56 L40 60 L36 56 Z" fill="#8edff6"/><path d="M8 16 L16 24 L8 32 L0 24 Z" fill="#f4fcff" stroke="#f4fcff" stroke-width="1.500" stroke-linejoin="round"/><path d="M8 20 L12 24 L8 28 L4 24 Z" fill="#8edff6"/><path d="M8 32 L16 40 L8 48 L0 40 Z" fill="#f4fcff" stroke="#f4fcff" stroke-width="1.500" stroke-linejoin="round"/><path d="M8 36 L12 40 L8 44 L4 40 Z" fill="#8edff6"/><path d="M56 16 L64 24 L56 32 L48 24 Z" fill="#f4fcff" stroke="#f4fcff" stroke-width="1.500" stroke-linejoin="round"/><path d="M56 20 L60 24 L56 28 L52 24 Z" fill="#8edff6"/><path d="M56 32 L64 40 L56 48 L48 40 Z" fill="#f4fcff" stroke="#f4fcff" stroke-width="1.500" stroke-linejoin="round"/><path d="M56 36 L60 40 L56 44 L52 40 Z" fill="#8edff6"/><circle cx="8" cy="8" r="5" fill="#f4fcff" opacity="0.55"/><circle cx="56" cy="8" r="5" fill="#f4fcff" opacity="0.55"/><circle cx="8" cy="56" r="5" fill="#f4fcff" opacity="0.55"/><circle cx="56" cy="56" r="5" fill="#f4fcff" opacity="0.55"/><rect x="16" y="16" width="32" height="32" fill="#f4fcff"/><path d="M18.5 18.5 L22.5 22.5 M22.5 18.5 L18.5 22.5" stroke="#8edff6" stroke-width="1.600" opacity="0.750"/><path d="M18.5 26 L22.5 30 M22.5 26 L18.5 30" stroke="#8edff6" stroke-width="1.600" opacity="0.750"/><path d="M18.5 34 L22.5 38 M22.5 34 L18.5 38" stroke="#8edff6" stroke-width="1.600" opacity="0.750"/><path d="M18.5 41.5 L22.5 45.5 M22.5 41.5 L18.5 45.5" stroke="#8edff6" stroke-width="1.600" opacity="0.750"/><path d="M26 18.5 L30 22.5 M30 18.5 L26 22.5" stroke="#8edff6" stroke-width="1.600" opacity="0.750"/><path d="M26 26 L30 30 M30 26 L26 30" stroke="#8edff6" stroke-width="1.600" opacity="0.750"/><path d="M26 34 L30 38 M30 34 L26 38" stroke="#8edff6" stroke-width="1.600" opacity="0.750"/><path d="M26 41.5 L30 45.5 M30 41.5 L26 45.5" stroke="#8edff6" stroke-width="1.600" opacity="0.750"/><path d="M34 18.5 L38 22.5 M38 18.5 L34 22.5" stroke="#8edff6" stroke-width="1.600" opacity="0.750"/><path d="M34 26 L38 30 M38 26 L34 30" stroke="#8edff6" stroke-width="1.600" opacity="0.750"/><path d="M34 34 L38 38 M38 34 L34 38" stroke="#8edff6" stroke-width="1.600" opacity="0.750"/><path d="M34 41.5 L38 45.5 M38 41.5 L34 45.5" stroke="#8edff6" stroke-width="1.600" opacity="0.750"/><path d="M41.5 18.5 L45.5 22.5 M45.5 18.5 L41.5 22.5" stroke="#8edff6" stroke-width="1.600" opacity="0.750"/><path d="M41.5 26 L45.5 30 M45.5 26 L41.5 30" stroke="#8edff6" stroke-width="1.600" opacity="0.750"/><path d="M41.5 34 L45.5 38 M45.5 34 L41.5 38" stroke="#8edff6" stroke-width="1.600" opacity="0.750"/><path d="M41.5 41.5 L45.5 45.5 M45.5 41.5 L41.5 45.5" stroke="#8edff6" stroke-width="1.600" opacity="0.750"/></g></svg>
<svg class="b" style="left:2149px;top:712px;" width="48" height="48" viewBox="0 0 48 48"><circle cx="24" cy="24" r="24" fill="#c3e6cd"/><circle cx="24" cy="23.800" r="16" fill="#1b864b"/><path d="M16.200 24.300 L21.500 29.800 L32 19.600" fill="none" stroke="#fff" stroke-width="4.200"/></svg>
<div class="b" style="left:3059px;top:705px;width:96px;height:63px;background:#fff;border:2px solid #c2c2c7;box-sizing:border-box;border-radius:8px;"></div>
<svg class="b" style="left:3077px;top:722px;" width="28" height="28" viewBox="0 0 28 28"><path d="M14 1 L14 20 M6.200 13 L14 20.500 L21.800 13" fill="none" stroke="#6f6e76" stroke-width="2.500" stroke-linejoin="round" stroke-linecap="round"/><path d="M1.500 16.500 L1.500 23 Q1.500 26.500 5 26.500 L23 26.500 Q26.500 26.500 26.500 23 L26.500 16.500" fill="none" stroke="#6f6e76" stroke-width="2.500" stroke-linejoin="round" stroke-linecap="round"/></svg>
<svg class="b" style="left:3122px;top:731.5px;" width="18" height="12" viewBox="0 0 18 12"><path d="M2 2 L9 9 L16 2" fill="none" stroke="#6f6e76" stroke-width="2.500" stroke-linejoin="round" stroke-linecap="round"/></svg>
<div class="b" style="left:723px;top:890px;width:172px;height:49px;background:#dcdcde;border-radius:25px;"></div>
<svg class="b" style="left:731px;top:898.5px;" width="32" height="32" viewBox="0 0 32 32"><circle cx="16" cy="16" r="16" fill="#fff"/><path d="M9.600 10 L22.600 22" stroke="#626168" stroke-width="4.300" stroke-linecap="round"/></svg>
<div class="t" style="left:771.5px;top:897.5px;font-size:24.5px;line-height:34px;color:#4c4b51;letter-spacing:0.44px;">Canceled</div>
<svg class="b" style="left:723px;top:950px;" width="24" height="24" viewBox="0 0 24 24"><rect x="2" y="4.500" width="20" height="17.500" rx="2" fill="none" stroke="#737278" stroke-width="2.4" stroke-linejoin="round" stroke-linecap="round"/><rect x="2" y="4.500" width="20" height="5.500" fill="#a9a8ad"/><path d="M2 10.500 L22 10.500 M7 1.500 L7 5 M17 1.500 L17 5" fill="none" stroke="#737278" stroke-width="2.4" stroke-linejoin="round" stroke-linecap="round"/><circle cx="16.500" cy="15" r="1.500" fill="#737278"/></svg>
<div class="t" style="left:755px;top:944.5px;font-size:24px;line-height:34px;color:#737278;letter-spacing:0.71px;">2 days ago</div>
<div class="t" style="left:1080px;top:886.5px;font-size:28px;line-height:39px;color:#1f75cb;letter-spacing:-0.34px;">DOCKER CONTAINER</div>
<div class="t" style="left:1080px;top:927.2px;font-size:28px;line-height:39px;color:#1f75cb;letter-spacing:1.09px;">#26</div>
<div class="b" style="left:1144px;top:931px;width:104px;height:34px;background:#ececef;border-radius:7px;"></div>
<svg class="b" style="left:1154px;top:937px;" width="20" height="22" viewBox="0 0 20 22"><circle cx="4" cy="4" r="2.500" fill="none" stroke="#55545c" stroke-width="2.1" stroke-linejoin="round" stroke-linecap="round"/><circle cx="4.500" cy="17.500" r="2.500" fill="none" stroke="#55545c" stroke-width="2.1" stroke-linejoin="round" stroke-linecap="round"/><circle cx="15.500" cy="4" r="2.500" fill="none" stroke="#55545c" stroke-width="2.1" stroke-linejoin="round" stroke-linecap="round"/><path d="M4 6.500 L4.500 15 M15.500 6.500 Q15 11 5 11.500" fill="none" stroke="#55545c" stroke-width="2.1" stroke-linejoin="round" stroke-linecap="round"/></svg>
<div class="t" style="left:1182.5px;top:932.7px;font-size:25px;line-height:35px;color:#57565d;letter-spacing:-0.88px;font-family:'Liberation Mono', monospace;">main</div>
<div class="b" style="left:1257px;top:933px;width:165px;height:31px;background:#ececef;border-radius:6px;"></div>
<svg class="b" style="left:1264px;top:940px;" width="26" height="16" viewBox="0 0 26 16"><circle cx="13" cy="8" r="5.300" fill="none" stroke="#55545c" stroke-width="2.1" stroke-linejoin="round" stroke-linecap="round"/><path d="M1.500 8 L7.500 8 M18.500 8 L24.500 8" fill="none" stroke="#55545c" stroke-width="2.1" stroke-linejoin="round" stroke-linecap="round"/></svg>
<div class="t" style="left:1301px;top:932.7px;font-size:25px;line-height:35px;color:#57565d;letter-spacing:-0.75px;font-family:'Liberation Mono', monospace;">b4191753</div>
<svg class="b" style="left:1435px;top:932px;" width="32" height="32" viewBox="0 0 64 64"><defs><clipPath id="cr2"><circle cx="32" cy="32" r="32"/></clipPath></defs><g clip-path="url(#cr2)"><rect width="64" height="64" fill="#87429a"/><path d="M24 1 L31 8 L24 15 L17 8 Z" fill="#f3e9f6"/><path d="M40 1 L47 8 L40 15 L33 8 Z" fill="#f3e9f6"/><path d="M24 49 L31 56 L24 63 L17 56 Z" fill="#f3e9f6"/><path d="M40 49 L47 56 L40 63 L33 56 Z" fill="#f3e9f6"/><path d="M8 17 L15 24 L8 31 L1 24 Z" fill="#f3e9f6"/><path d="M8 33 L15 40 L8 47 L1 40 Z" fill="#f3e9f6"/><path d="M56 17 L63 24 L56 31 L49 24 Z" fill="#f3e9f6"/><path d="M56 33 L63 40 L56 47 L49 40 Z" fill="#f3e9f6"/><rect x="8" y="10" width="8" height="8" fill="#6c6670"/><rect x="48" y="10" width="8" height="8" fill="#6c6670"/><rect x="8" y="46" width="8" height="8" fill="#6c6670"/><rect x="48" y="46" width="8" height="8" fill="#6c6670"/><rect x="19" y="19" width="10" height="10" fill="#c07ad0"/><rect x="35" y="19" width="10" height="10" fill="#c07ad0"/><rect x="19" y="35" width="10" height="10" fill="#c07ad0"/><rect x="35" y="35" width="10" height="10" fill="#c07ad0"/></g></svg>
<svg class="b" style="left:1809px;top:890px;" width="64" height="64" viewBox="0 0 64 64"><defs><clipPath id="cu2"><circle cx="32" cy="32" r="32"/></clipPath></defs><g clip-path="url(#cu2)"><rect width="64" height="64" fill="#8edff6"/><path d="M24 0 L32 8 L24 16 L16 8 Z" fill="#f4fcff" stroke="#f4fcff" stroke-width="1.500" stroke-linejoin="round"/><path d="M24 4 L28 8 L24 12 L20 8 Z" fill="#8edff6"/><path d="M40 0 L48 8 L40 16 L32 8 Z" fill="#f4fcff" stroke="#f4fcff" stroke-width="1.500" stroke-linejoin="round"/><path d="M40 4 L44 8 L40 12 L36 8 Z" fill="#8edff6"/><path d="M24 48 L32 56 L24 64 L16 56 Z" fill="#f4fcff" stroke="#f4fcff" stroke-width="1.500" stroke-linejoin="round"/><path d="M24 52 L28 56 L24 60 L20 56 Z" fill="#8edff6"/><path d="M40 48 L48 56 L40 64 L32 56 Z" fill="#f4fcff" stroke="#f4fcff" stroke-width="1.500" stroke-linejoin="round"/><path d="M40 52 L44 56 L40 60 L36 56 Z" fill="#8edff6"/><path d="M8 16 L16 24 L8 32 L0 24 Z" fill="#f4fcff" stroke="#f4fcff" stroke-width="1.500" stroke-linejoin="round"/><path d="M8 20 L12 24 L8 28 L4 24 Z" fill="#8edff6"/><path d="M8 32 L16 40 L8 48 L0 40 Z" fill="#f4fcff" stroke="#f4fcff" stroke-width="1.500" stroke-linejoin="round"/><path d="M8 36 L12 40 L8 44 L4 40 Z" fill="#8edff6"/><path d="M56 16 L64 24 L56 32 L48 24 Z" fill="#f4fcff" stroke="#f4fcff" stroke-width="1.500" stroke-linejoin="round"/><path d="M56 20 L60 24 L56 28 L52 24 Z" fill="#8edff6"/><path d="M56 32 L64 40 L56 48 L48 40 Z" fill="#f4fcff" stroke="#f4fcff" stroke-width="1.500" stroke-linejoin="round"/><path d="M56 36 L60 40 L56 44 L52 40 Z" fill="#8edff6"/><circle cx="8" cy="8" r="5" fill="#f4fcff" opacity="0.55"/><circle cx="56" cy="8" r="5" fill="#f4fcff" opacity="0.55"/><circle cx="8" cy="56" r="5" fill="#f4fcff" opacity="0.55"/><circle cx="56" cy="56" r="5" fill="#f4fcff" opacity="0.55"/><rect x="16" y="16" width="32" height="32" fill="#f4fcff"/><path d="M18.5 18.5 L22.5 22.5 M22.5 18.5 L18.5 22.5" stroke="#8edff6" stroke-width="1.600" opacity="0.750"/><path d="M18.5 26 L22.5 30 M22.5 26 L18.5 30" stroke="#8edff6" stroke-width="1.600" opacity="0.750"/><path d="M18.5 34 L22.5 38 M22.5 34 L18.5 38" stroke="#8edff6" stroke-width="1.600" opacity="0.750"/><path d="M18.5 41.5 L22.5 45.5 M22.5 41.5 L18.5 45.5" stroke="#8edff6" stroke-width="1.600" opacity="0.750"/><path d="M26 18.5 L30 22.5 M30 18.5 L26 22.5" stroke="#8edff6" stroke-width="1.600" opacity="0.750"/><path d="M26 26 L30 30 M30 26 L26 30" stroke="#8edff6" stroke-width="1.600" opacity="0.750"/><path d="M26 34 L30 38 M30 34 L26 38" stroke="#8edff6" stroke-width="1.600" opacity="0.750"/><path d="M26 41.5 L30 45.5 M30 41.5 L26 45.5" stroke="#8edff6" stroke-width="1.600" opacity="0.750"/><path d="M34 18.5 L38 22.5 M38 18.5 L34 22.5" stroke="#8edff6" stroke-width="1.600" opacity="0.750"/><path d="M34 26 L38 30 M38 26 L34 30" stroke="#8edff6" stroke-width="1.600" opacity="0.750"/><path d="M34 34 L38 38 M38 34 L34 38" stroke="#8edff6" stroke-width="1.600" opacity="0.750"/><path d="M34 41.5 L38 45.5 M38 41.5 L34 45.5" stroke="#8edff6" stroke-width="1.600" opacity="0.750"/><path d="M41.5 18.5 L45.5 22.5 M45.5 18.5 L41.5 22.5" stroke="#8edff6" stroke-width="1.600" opacity="0.750"/><path d="M41.5 26 L45.5 30 M45.5 26 L41.5 30" stroke="#8edff6" stroke-width="1.600" opacity="0.750"/><path d="M41.5 34 L45.5 38 M45.5 34 L41.5 38" stroke="#8edff6" stroke-width="1.600" opacity="0.750"/><path d="M41.5 41.5 L45.5 45.5 M45.5 41.5 L41.5 45.5" stroke="#8edff6" stroke-width="1.600" opacity="0.750"/></g></svg>
<svg class="b" style="left:2149px;top:898px;" width="48" height="48" viewBox="0 0 48 48"><circle cx="24" cy="24" r="24" fill="#dfdfe2"/><circle cx="24" cy="24" r="16.200" fill="#fff"/><path d="M17.600 18 L30.600 30" stroke="#626168" stroke-width="4.300" stroke-linecap="round"/></svg>
<div class="b" style="left:2997px;top:891px;width:158px;height:63px;background:#fff;border:2px solid #c2c2c7;box-sizing:border-box;border-radius:8px;"></div>
<div class="b" style="left:3059px;top:891px;width:2px;height:63px;background:#c2c2c7;"></div>
<svg class="b" style="left:3013px;top:905px;" width="33" height="33" viewBox="0 0 33 33"><path d="M2.500 13.500 A13.800 13.800 0 0 1 28 8.500" fill="none" stroke="#6f6e76" stroke-width="2.500" stroke-linejoin="round" stroke-linecap="round"/><path d="M30.500 18.500 A13.800 13.800 0 0 1 5 23.500" fill="none" stroke="#6f6e76" stroke-width="2.500" stroke-linejoin="round" stroke-linecap="round"/><path d="M32.500 0.500 L32 11 L22 10.300 Z" fill="#6f6e76"/><path d="M0.500 31.500 L1 21 L11 21.700 Z" fill="#6f6e76"/></svg>
<svg class="b" style="left:3077px;top:908px;" width="28" height="28" viewBox="0 0 28 28"><path d="M14 1 L14 20 M6.200 13 L14 20.500 L21.800 13" fill="none" stroke="#6f6e76" stroke-width="2.500" stroke-linejoin="round" stroke-linecap="round"/><path d="M1.500 16.500 L1.500 23 Q1.500 26.500 5 26.500 L23 26.500 Q26.500 26.500 26.500 23 L26.500 16.500" fill="none" stroke="#6f6e76" stroke-width="2.500" stroke-linejoin="round" stroke-linecap="round"/></svg>
<svg class="b" style="left:3122px;top:917.5px;" width="18" height="12" viewBox="0 0 18 12"><path d="M2 2 L9 9 L16 2" fill="none" stroke="#6f6e76" stroke-width="2.500" stroke-linejoin="round" stroke-linecap="round"/></svg>
<div class="b" style="left:723px;top:1044px;width:172px;height:49px;background:#dcdcde;border-radius:25px;"></div>
<svg class="b" style="left:731px;top:1052.5px;" width="32" height="32" viewBox="0 0 32 32"><circle cx="16" cy="16" r="16" fill="#fff"/><path d="M9.600 10 L22.600 22" stroke="#626168" stroke-width="4.300" stroke-linecap="round"/></svg>
<div class="t" style="left:771.5px;top:1051.5px;font-size:24.5px;line-height:34px;color:#4c4b51;letter-spacing:0.44px;">Canceled</div>
<svg class="b" style="left:723px;top:1104px;" width="24" height="24" viewBox="0 0 24 24"><rect x="2" y="4.500" width="20" height="17.500" rx="2" fill="none" stroke="#737278" stroke-width="2.4" stroke-linejoin="round" stroke-linecap="round"/><rect x="2" y="4.500" width="20" height="5.500" fill="#a9a8ad"/><path d="M2 10.500 L22 10.500 M7 1.500 L7 5 M17 1.500 L17 5" fill="none" stroke="#737278" stroke-width="2.4" stroke-linejoin="round" stroke-linecap="round"/><circle cx="16.500" cy="15" r="1.500" fill="#737278"/></svg>
<div class="t" style="left:755px;top:1098.5px;font-size:24px;line-height:34px;color:#737278;letter-spacing:0.71px;">2 days ago</div>
<div class="t" style="left:1080px;top:1040.5px;font-size:28px;line-height:39px;color:#1f75cb;letter-spacing:-0.34px;">DOCKER CONTAINER</div>
<div class="t" style="left:1080px;top:1081.2px;font-size:28px;line-height:39px;color:#1f75cb;letter-spacing:1.09px;">#25</div>
<div class="b" style="left:1144px;top:1085px;width:104px;height:34px;background:#ececef;border-radius:7px;"></div>
<svg class="b" style="left:1154px;top:1091px;" width="20" height="22" viewBox="0 0 20 22"><circle cx="4" cy="4" r="2.500" fill="none" stroke="#55545c" stroke-width="2.1" stroke-linejoin="round" stroke-linecap="round"/><circle cx="4.500" cy="17.500" r="2.500" fill="none" stroke="#55545c" stroke-width="2.1" stroke-linejoin="round" stroke-linecap="round"/><circle cx="15.500" cy="4" r="2.500" fill="none" stroke="#55545c" stroke-width="2.1" stroke-linejoin="round" stroke-linecap="round"/><path d="M4 6.500 L4.500 15 M15.500 6.500 Q15 11 5 11.500" fill="none" stroke="#55545c" stroke-width="2.1" stroke-linejoin="round" stroke-linecap="round"/></svg>
<div class="t" style="left:1182.5px;top:1086.7px;font-size:25px;line-height:35px;color:#57565d;letter-spacing:-0.88px;font-family:'Liberation Mono', monospace;">main</div>
<div class="b" style="left:1257px;top:1087px;width:165px;height:31px;background:#ececef;border-radius:6px;"></div>
<svg class="b" style="left:1264px;top:1094px;" width="26" height="16" viewBox="0 0 26 16"><circle cx="13" cy="8" r="5.300" fill="none" stroke="#55545c" stroke-width="2.1" stroke-linejoin="round" stroke-linecap="round"/><path d="M1.500 8 L7.500 8 M18.500 8 L24.500 8" fill="none" stroke="#55545c" stroke-width="2.1" stroke-linejoin="round" stroke-linecap="round"/></svg>
<div class="t" style="left:1301px;top:1086.7px;font-size:25px;line-height:35px;color:#57565d;letter-spacing:-0.75px;font-family:'Liberation Mono', monospace;">b4191753</div>
<svg class="b" style="left:1435px;top:1086px;" width="32" height="32" viewBox="0 0 64 64"><defs><clipPath id="cr3"><circle cx="32" cy="32" r="32"/></clipPath></defs><g clip-path="url(#cr3)"><rect width="64" height="64" fill="#87429a"/><path d="M24 1 L31 8 L24 15 L17 8 Z" fill="#f3e9f6"/><path d="M40 1 L47 8 L40 15 L33 8 Z" fill="#f3e9f6"/><path d="M24 49 L31 56 L24 63 L17 56 Z" fill="#f3e9f6"/><path d="M40 49 L47 56 L40 63 L33 56 Z" fill="#f3e9f6"/><path d="M8 17 L15 24 L8 31 L1 24 Z" fill="#f3e9f6"/><path d="M8 33 L15 40 L8 47 L1 40 Z" fill="#f3e9f6"/><path d="M56 17 L63 24 L56 31 L49 24 Z" fill="#f3e9f6"/><path d="M56 33 L63 40 L56 47 L49 40 Z" fill="#f3e9f6"/><rect x="8" y="10" width="8" height="8" fill="#6c6670"/><rect x="48" y="10" width="8" height="8" fill="#6c6670"/><rect x="8" y="46" width="8" height="8" fill="#6c6670"/><rect x="48" y="46" width="8" height="8" fill="#6c6670"/><rect x="19" y="19" width="10" height="10" fill="#c07ad0"/><rect x="35" y="19" width="10" height="10" fill="#c07ad0"/><rect x="19" y="35" width="10" height="10" fill="#c07ad0"/><rect x="35" y="35" width="10" height="10" fill="#c07ad0"/></g></svg>
<svg class="b" style="left:1809px;top:1044px;" width="64" height="64" viewBox="0 0 64 64"><defs><clipPath id="cu3"><circle cx="32" cy="32" r="32"/></clipPath></defs><g clip-path="url(#cu3)"><rect width="64" height="64" fill="#8edff6"/><path d="M24 0 L32 8 L24 16 L16 8 Z" fill="#f4fcff" stroke="#f4fcff" stroke-width="1.500" stroke-linejoin="round"/><path d="M24 4 L28 8 L24 12 L20 8 Z" fill="#8edff6"/><path d="M40 0 L48 8 L40 16 L32 8 Z" fill="#f4fcff" stroke="#f4fcff" stroke-width="1.500" stroke-linejoin="round"/><path d="M40 4 L44 8 L40 12 L36 8 Z" fill="#8edff6"/><path d="M24 48 L32 56 L24 64 L16 56 Z" fill="#f4fcff" stroke="#f4fcff" stroke-width="1.500" stroke-linejoin="round"/><path d="M24 52 L28 56 L24 60 L20 56 Z" fill="#8edff6"/><path d="M40 48 L48 56 L40 64 L32 56 Z" fill="#f4fcff" stroke="#f4fcff" stroke-width="1.500" stroke-linejoin="round"/><path d="M40 52 L44 56 L40 60 L36 56 Z" fill="#8edff6"/><path d="M8 16 L16 24 L8 32 L0 24 Z" fill="#f4fcff" stroke="#f4fcff" stroke-width="1.500" stroke-linejoin="round"/><path d="M8 20 L12 24 L8 28 L4 24 Z" fill="#8edff6"/><path d="M8 32 L16 40 L8 48 L0 40 Z" fill="#f4fcff" stroke="#f4fcff" stroke-width="1.500" stroke-linejoin="round"/><path d="M8 36 L12 40 L8 44 L4 40 Z" fill="#8edff6"/><path d="M56 16 L64 24 L56 32 L48 24 Z" fill="#f4fcff" stroke="#f4fcff" stroke-width="1.500" stroke-linejoin="round"/><path d="M56 20 L60 24 L56 28 L52 24 Z" fill="#8edff6"/><path d="M56 32 L64 40 L56 48 L48 40 Z" fill="#f4fcff" stroke="#f4fcff" stroke-width="1.500" stroke-linejoin="round"/><path d="M56 36 L60 40 L56 44 L52 40 Z" fill="#8edff6"/><circle cx="8" cy="8" r="5" fill="#f4fcff" opacity="0.55"/><circle cx="56" cy="8" r="5" fill="#f4fcff" opacity="0.55"/><circle cx="8" cy="56" r="5" fill="#f4fcff" opacity="0.55"/><circle cx="56" cy="56" r="5" fill="#f4fcff" opacity="0.55"/><rect x="16" y="16" width="32" height="32" fill="#f4fcff"/><path d="M18.5 18.5 L22.5 22.5 M22.5 18.5 L18.5 22.5" stroke="#8edff6" stroke-width="1.600" opacity="0.750"/><path d="M18.5 26 L22.5 30 M22.5 26 L18.5 30" stroke="#8edff6" stroke-width="1.600" opacity="0.750"/><path d="M18.5 34 L22.5 38 M22.5 34 L18.5 38" stroke="#8edff6" stroke-width="1.600" opacity="0.750"/><path d="M18.5 41.5 L22.5 45.5 M22.5 41.5 L18.5 45.5" stroke="#8edff6" stroke-width="1.600" opacity="0.750"/><path d="M26 18.5 L30 22.5 M30 18.5 L26 22.5" stroke="#8edff6" stroke-width="1.600" opacity="0.750"/><path d="M26 26 L30 30 M30 26 L26 30" stroke="#8edff6" stroke-width="1.600" opacity="0.750"/><path d="M26 34 L30 38 M30 34 L26 38" stroke="#8edff6" stroke-width="1.600" opacity="0.750"/><path d="M26 41.5 L30 45.5 M30 41.5 L26 45.5" stroke="#8edff6" stroke-width="1.600" opacity="0.750"/><path d="M34 18.5 L38 22.5 M38 18.5 L34 22.5" stroke="#8edff6" stroke-width="1.600" opacity="0.750"/><path d="M34 26 L38 30 M38 26 L34 30" stroke="#8edff6" stroke-width="1.600" opacity="0.750"/><path d="M34 34 L38 38 M38 34 L34 38" stroke="#8edff6" stroke-width="1.600" opacity="0.750"/><path d="M34 41.5 L38 45.5 M38 41.5 L34 45.5" stroke="#8edff6" stroke-width="1.600" opacity="0.750"/><path d="M41.5 18.5 L45.5 22.5 M45.5 18.5 L41.5 22.5" stroke="#8edff6" stroke-width="1.600" opacity="0.750"/><path d="M41.5 26 L45.5 30 M45.5 26 L41.5 30" stroke="#8edff6" stroke-width="1.600" opacity="0.750"/><path d="M41.5 34 L45.5 38 M45.5 34 L41.5 38" stroke="#8edff6" stroke-width="1.600" opacity="0.750"/><path d="M41.5 41.5 L45.5 45.5 M45.5 41.5 L41.5 45.5" stroke="#8edff6" stroke-width="1.600" opacity="0.750"/></g></svg>
<svg class="b" style="left:2149px;top:1052px;" width="48" height="48" viewBox="0 0 48 48"><circle cx="24" cy="24" r="24" fill="#dfdfe2"/><circle cx="24" cy="24" r="16.200" fill="#fff"/><path d="M17.600 18 L30.600 30" stroke="#626168" stroke-width="4.300" stroke-linecap="round"/></svg>
<div class="b" style="left:2997px;top:1045px;width:158px;height:63px;background:#fff;border:2px solid #c2c2c7;box-sizing:border-box;border-radius:8px;"></div>
<div class="b" style="left:3059px;top:1045px;width:2px;height:63px;background:#c2c2c7;"></div>
<svg class="b" style="left:3013px;top:1059px;" width="33" height="33" viewBox="0 0 33 33"><path d="M2.500 13.500 A13.800 13.800 0 0 1 28 8.500" fill="none" stroke="#6f6e76" stroke-width="2.500" stroke-linejoin="round" stroke-linecap="round"/><path d="M30.500 18.500 A13.800 13.800 0 0 1 5 23.500" fill="none" stroke="#6f6e76" stroke-width="2.500" stroke-linejoin="round" stroke-linecap="round"/><path d="M32.500 0.500 L32 11 L22 10.300 Z" fill="#6f6e76"/><path d="M0.500 31.500 L1 21 L11 21.700 Z" fill="#6f6e76"/></svg>
<svg class="b" style="left:3077px;top:1062px;" width="28" height="28" viewBox="0 0 28 28"><path d="M14 1 L14 20 M6.200 13 L14 20.500 L21.800 13" fill="none" stroke="#6f6e76" stroke-width="2.500" stroke-linejoin="round" stroke-linecap="round"/><path d="M1.500 16.500 L1.500 23 Q1.500 26.500 5 26.500 L23 26.500 Q26.500 26.500 26.500 23 L26.500 16.500" fill="none" stroke="#6f6e76" stroke-width="2.500" stroke-linejoin="round" stroke-linecap="round"/></svg>
<svg class="b" style="left:3122px;top:1071.5px;" width="18" height="12" viewBox="0 0 18 12"><path d="M2 2 L9 9 L16 2" fill="none" stroke="#6f6e76" stroke-width="2.500" stroke-linejoin="round" stroke-linecap="round"/></svg>
<div class="b" style="left:723px;top:1197px;width:146px;height:49px;background:#c3e6cd;border-radius:25px;"></div>
<svg class="b" style="left:731px;top:1205.5px;" width="32" height="32" viewBox="0 0 32 32"><circle cx="16" cy="16" r="16" fill="#1b864b"/><path d="M8.500 17 L14.500 22.500 L24 12.500" fill="none" stroke="#fff" stroke-width="4.4" stroke-linejoin="miter"/></svg>
<div class="t" style="left:771.5px;top:1204.5px;font-size:24.5px;line-height:34px;color:#24663b;letter-spacing:0.05px;">Passed</div>
<svg class="b" style="left:723px;top:1258px;" width="24" height="26" viewBox="0 0 24 26"><circle cx="11.700" cy="14.300" r="9.300" fill="none" stroke="#737278" stroke-width="2.4" stroke-linejoin="round" stroke-linecap="round"/><path d="M11.700 8.500 L11.700 14.300 L15 17.500 M9 1.500 L14.500 1.500 M11.700 1.500 L11.700 4.500 M19.500 5 L21 6.500" fill="none" stroke="#737278" stroke-width="2.4" stroke-linejoin="round" stroke-linecap="round"/></svg>
<div class="t" style="left:755px;top:1252.5px;font-size:24px;line-height:34px;color:#737278;letter-spacing:0.57px;">00:06:16</div>
<svg class="b" style="left:723px;top:1290px;" width="24" height="24" viewBox="0 0 24 24"><rect x="2" y="4.500" width="20" height="17.500" rx="2" fill="none" stroke="#737278" stroke-width="2.4" stroke-linejoin="round" stroke-linecap="round"/><rect x="2" y="4.500" width="20" height="5.500" fill="#a9a8ad"/><path d="M2 10.500 L22 10.500 M7 1.500 L7 5 M17 1.500 L17 5" fill="none" stroke="#737278" stroke-width="2.4" stroke-linejoin="round" stroke-linecap="round"/><circle cx="16.500" cy="15" r="1.500" fill="#737278"/></svg>
<div class="t" style="left:755px;top:1284.5px;font-size:24px;line-height:34px;color:#737278;letter-spacing:0.69px;">2 years ago</div>
<div class="t" style="left:1080px;top:1194.5px;font-size:28px;line-height:39px;color:#1f75cb;letter-spacing:-0.34px;">DOCKER CONTAINER</div>
<div class="t" style="left:1080px;top:1233.2px;font-size:28px;line-height:39px;color:#1f75cb;letter-spacing:-1.58px;">#1</div>
<div class="b" style="left:1122px;top:1237px;width:104px;height:34px;background:#ececef;border-radius:7px;"></div>
<svg class="b" style="left:1132px;top:1243px;" width="20" height="22" viewBox="0 0 20 22"><circle cx="4" cy="4" r="2.500" fill="none" stroke="#55545c" stroke-width="2.1" stroke-linejoin="round" stroke-linecap="round"/><circle cx="4.500" cy="17.500" r="2.500" fill="none" stroke="#55545c" stroke-width="2.1" stroke-linejoin="round" stroke-linecap="round"/><circle cx="15.500" cy="4" r="2.500" fill="none" stroke="#55545c" stroke-width="2.1" stroke-linejoin="round" stroke-linecap="round"/><path d="M4 6.500 L4.500 15 M15.500 6.500 Q15 11 5 11.500" fill="none" stroke="#55545c" stroke-width="2.1" stroke-linejoin="round" stroke-linecap="round"/></svg>
<div class="t" style="left:1160.5px;top:1238.7px;font-size:25px;line-height:35px;color:#57565d;letter-spacing:-0.88px;font-family:'Liberation Mono', monospace;">main</div>
<div class="b" style="left:1235px;top:1239px;width:165px;height:31px;background:#ececef;border-radius:6px;"></div>
<svg class="b" style="left:1242px;top:1246px;" width="26" height="16" viewBox="0 0 26 16"><circle cx="13" cy="8" r="5.300" fill="none" stroke="#55545c" stroke-width="2.1" stroke-linejoin="round" stroke-linecap="round"/><path d="M1.500 8 L7.500 8 M18.500 8 L24.500 8" fill="none" stroke="#55545c" stroke-width="2.1" stroke-linejoin="round" stroke-linecap="round"/></svg>
<div class="t" style="left:1279px;top:1238.7px;font-size:25px;line-height:35px;color:#57565d;letter-spacing:-0.75px;font-family:'Liberation Mono', monospace;">b4191753</div>
<svg class="b" style="left:1413px;top:1238px;" width="32" height="32" viewBox="0 0 64 64"><defs><clipPath id="cr4"><circle cx="32" cy="32" r="32"/></clipPath></defs><g clip-path="url(#cr4)"><rect width="64" height="64" fill="#87429a"/><path d="M24 1 L31 8 L24 15 L17 8 Z" fill="#f3e9f6"/><path d="M40 1 L47 8 L40 15 L33 8 Z" fill="#f3e9f6"/><path d="M24 49 L31 56 L24 63 L17 56 Z" fill="#f3e9f6"/><path d="M40 49 L47 56 L40 63 L33 56 Z" fill="#f3e9f6"/><path d="M8 17 L15 24 L8 31 L1 24 Z" fill="#f3e9f6"/><path d="M8 33 L15 40 L8 47 L1 40 Z" fill="#f3e9f6"/><path d="M56 17 L63 24 L56 31 L49 24 Z" fill="#f3e9f6"/><path d="M56 33 L63 40 L56 47 L49 40 Z" fill="#f3e9f6"/><rect x="8" y="10" width="8" height="8" fill="#6c6670"/><rect x="48" y="10" width="8" height="8" fill="#6c6670"/><rect x="8" y="46" width="8" height="8" fill="#6c6670"/><rect x="48" y="46" width="8" height="8" fill="#6c6670"/><rect x="19" y="19" width="10" height="10" fill="#c07ad0"/><rect x="35" y="19" width="10" height="10" fill="#c07ad0"/><rect x="19" y="35" width="10" height="10" fill="#c07ad0"/><rect x="35" y="35" width="10" height="10" fill="#c07ad0"/></g></svg>
<svg class="b" style="left:1809px;top:1198px;" width="64" height="64" viewBox="0 0 64 64"><defs><clipPath id="cu4"><circle cx="32" cy="32" r="32"/></clipPath></defs><g clip-path="url(#cu4)"><rect width="64" height="64" fill="#8edff6"/><path d="M24 0 L32 8 L24 16 L16 8 Z" fill="#f4fcff" stroke="#f4fcff" stroke-width="1.500" stroke-linejoin="round"/><path d="M24 4 L28 8 L24 12 L20 8 Z" fill="#8edff6"/><path d="M40 0 L48 8 L40 16 L32 8 Z" fill="#f4fcff" stroke="#f4fcff" stroke-width="1.500" stroke-linejoin="round"/><path d="M40 4 L44 8 L40 12 L36 8 Z" fill="#8edff6"/><path d="M24 48 L32 56 L24 64 L16 56 Z" fill="#f4fcff" stroke="#f4fcff" stroke-width="1.500" stroke-linejoin="round"/><path d="M24 52 L28 56 L24 60 L20 56 Z" fill="#8edff6"/><path d="M40 48 L48 56 L40 64 L32 56 Z" fill="#f4fcff" stroke="#f4fcff" stroke-width="1.500" stroke-linejoin="round"/><path d="M40 52 L44 56 L40 60 L36 56 Z" fill="#8edff6"/><path d="M8 16 L16 24 L8 32 L0 24 Z" fill="#f4fcff" stroke="#f4fcff" stroke-width="1.500" stroke-linejoin="round"/><path d="M8 20 L12 24 L8 28 L4 24 Z" fill="#8edff6"/><path d="M8 32 L16 40 L8 48 L0 40 Z" fill="#f4fcff" stroke="#f4fcff" stroke-width="1.500" stroke-linejoin="round"/><path d="M8 36 L12 40 L8 44 L4 40 Z" fill="#8edff6"/><path d="M56 16 L64 24 L56 32 L48 24 Z" fill="#f4fcff" stroke="#f4fcff" stroke-width="1.500" stroke-linejoin="round"/><path d="M56 20 L60 24 L56 28 L52 24 Z" fill="#8edff6"/><path d="M56 32 L64 40 L56 48 L48 40 Z" fill="#f4fcff" stroke="#f4fcff" stroke-width="1.500" stroke-linejoin="round"/><path d="M56 36 L60 40 L56 44 L52 40 Z" fill="#8edff6"/><circle cx="8" cy="8" r="5" fill="#f4fcff" opacity="0.55"/><circle cx="56" cy="8" r="5" fill="#f4fcff" opacity="0.55"/><circle cx="8" cy="56" r="5" fill="#f4fcff" opacity="0.55"/><circle cx="56" cy="56" r="5" fill="#f4fcff" opacity="0.55"/><rect x="16" y="16" width="32" height="32" fill="#f4fcff"/><path d="M18.5 18.5 L22.5 22.5 M22.5 18.5 L18.5 22.5" stroke="#8edff6" stroke-width="1.600" opacity="0.750"/><path d="M18.5 26 L22.5 30 M22.5 26 L18.5 30" stroke="#8edff6" stroke-width="1.600" opacity="0.750"/><path d="M18.5 34 L22.5 38 M22.5 34 L18.5 38" stroke="#8edff6" stroke-width="1.600" opacity="0.750"/><path d="M18.5 41.5 L22.5 45.5 M22.5 41.5 L18.5 45.5" stroke="#8edff6" stroke-width="1.600" opacity="0.750"/><path d="M26 18.5 L30 22.5 M30 18.5 L26 22.5" stroke="#8edff6" stroke-width="1.600" opacity="0.750"/><path d="M26 26 L30 30 M30 26 L26 30" stroke="#8edff6" stroke-width="1.600" opacity="0.750"/><path d="M26 34 L30 38 M30 34 L26 38" stroke="#8edff6" stroke-width="1.600" opacity="0.750"/><path d="M26 41.5 L30 45.5 M30 41.5 L26 45.5" stroke="#8edff6" stroke-width="1.600" opacity="0.750"/><path d="M34 18.5 L38 22.5 M38 18.5 L34 22.5" stroke="#8edff6" stroke-width="1.600" opacity="0.750"/><path d="M34 26 L38 30 M38 26 L34 30" stroke="#8edff6" stroke-width="1.600" opacity="0.750"/><path d="M34 34 L38 38 M38 34 L34 38" stroke="#8edff6" stroke-width="1.600" opacity="0.750"/><path d="M34 41.5 L38 45.5 M38 41.5 L34 45.5" stroke="#8edff6" stroke-width="1.600" opacity="0.750"/><path d="M41.5 18.5 L45.5 22.5 M45.5 18.5 L41.5 22.5" stroke="#8edff6" stroke-width="1.600" opacity="0.750"/><path d="M41.5 26 L45.5 30 M45.5 26 L41.5 30" stroke="#8edff6" stroke-width="1.600" opacity="0.750"/><path d="M41.5 34 L45.5 38 M45.5 34 L41.5 38" stroke="#8edff6" stroke-width="1.600" opacity="0.750"/><path d="M41.5 41.5 L45.5 45.5 M45.5 41.5 L41.5 45.5" stroke="#8edff6" stroke-width="1.600" opacity="0.750"/></g></svg>
<svg class="b" style="left:2149px;top:1206px;" width="48" height="48" viewBox="0 0 48 48"><circle cx="24" cy="24" r="24" fill="#c3e6cd"/><circle cx="24" cy="23.800" r="16" fill="#1b864b"/><path d="M16.200 24.300 L21.500 29.800 L32 19.600" fill="none" stroke="#fff" stroke-width="4.200"/></svg>
<div class="b" style="left:3059px;top:1198px;width:96px;height:63px;background:#fff;border:2px solid #c2c2c7;box-sizing:border-box;border-radius:8px;"></div>
<svg class="b" style="left:3077px;top:1215px;" width="28" height="28" viewBox="0 0 28 28"><path d="M14 1 L14 20 M6.200 13 L14 20.500 L21.800 13" fill="none" stroke="#6f6e76" stroke-width="2.500" stroke-linejoin="round" stroke-linecap="round"/><path d="M1.500 16.500 L1.500 23 Q1.500 26.500 5 26.500 L23 26.500 Q26.500 26.500 26.500 23 L26.500 16.500" fill="none" stroke="#6f6e76" stroke-width="2.500" stroke-linejoin="round" stroke-linecap="round"/></svg>
<svg class="b" style="left:3122px;top:1224.5px;" width="18" height="12" viewBox="0 0 18 12"><path d="M2 2 L9 9 L16 2" fill="none" stroke="#6f6e76" stroke-width="2.500" stroke-linejoin="round" stroke-linecap="round"/></svg>
<div class="b" style="left:0px;top:1746px;width:3366px;height:80px;background:#0b1219;"></div>
<svg class="b" style="left:34px;top:1769px;" width="34" height="34" viewBox="0 0 34 34"><path d="M0 4.500 L13.500 2.700 L13.500 16 L0 16 Z M15.500 2.400 L34 0 L34 16 L15.500 16 Z M0 18 L13.500 18 L13.500 31.300 L0 29.500 Z M15.500 18 L34 18 L34 34 L15.500 31.600 Z" fill="#fff"/></svg>
<svg class="b" style="left:129px;top:1762px;" width="49" height="45" viewBox="0 0 49 45"><defs><linearGradient id="cp1" x1="0" y1="0" x2="0" y2="1"><stop offset="0" stop-color="#2d95f2"/><stop offset="0.45" stop-color="#4fa6b8"/><stop offset="0.7" stop-color="#8fb06a"/><stop offset="1" stop-color="#f4b92a"/></linearGradient><linearGradient id="cp2" x1="0" y1="0" x2="0" y2="1"><stop offset="0" stop-color="#b17cd4"/><stop offset="0.5" stop-color="#d9648f"/><stop offset="1" stop-color="#e99a68"/></linearGradient></defs><path d="M14 1.500 L33 1.500 Q38 3 36 11 L30 13 L25 13 Q22 13 21 16 L16.500 32 L5 32 Q0 31 1.500 24 L6 8 Q8 1.500 14 1.500 Z" fill="url(#cp1)"/><path d="M26 1.500 Q33 1.500 35 6 L37 12 L28 13 L24 13 Z" fill="#2378d8"/><path d="M35 43.500 L18 43.500 Q14 43 13 38 L12 32 L19 31 L24 31 Q27 31 28 28 L32.500 12 L43 12 Q49 13 47.500 20 L43 36 Q41 43.500 35 43.500 Z" fill="url(#cp2)"/><path d="M12 32 L20 31 L24 31 L22 43.500 L18 43.500 Q14 43 13 38 Z" fill="#f2642b"/></svg>
<svg class="b" style="left:228px;top:1767px;" width="46" height="38" viewBox="0 0 46 38"><path d="M1 3 Q1 1 3 1 L17 1 L21 4.500 L43 4.500 Q45 4.500 45 6.500 L45 33 Q45 35 43 35 L3 35 Q1 35 1 33 Z" fill="#efb52c"/><path d="M1 10 L1 33 Q1 35 3 35 L43 35 Q45 35 45 33 L45 6.500 Q45 4.500 43 4.500 L21 4.500 L17 8 L3 8 Q1 8 1 10 Z" fill="#f9d362"/><path d="M9 37 L9 26 Q9 22 13 22 L33 22 Q37 22 37 26 L37 37 L29 37 L29 30 L17 30 L17 37 Z" fill="#3a9bea"/><rect x="17" y="30" width="12" height="5" fill="#f4c23a"/></svg>
<div class="b" style="left:301px;top:1746px;width:319px;height:80px;background:#3b4148;"></div>
<div class="b" style="left:301px;top:1822px;width:319px;height:4px;background:#6cb0e6;"></div>
<svg class="b" style="left:320px;top:1762px;" width="48" height="48" viewBox="0 0 48 48"><circle cx="24" cy="24" r="23" fill="#fff"/><path d="M24 1 A23 23 0 0 1 43.900 12.500 L24 12.500 A11.500 11.500 0 0 0 14 18.300 L4.100 12.500 A23 23 0 0 1 24 1 Z" fill="#e33b2e"/><path d="M43.900 12.500 A23 23 0 0 1 24 47 L34 29.800 A11.500 11.500 0 0 0 34 18.300 L24 12.500 Z" fill="#fbc116"/><path d="M4.100 12.500 L14 29.800 A11.500 11.500 0 0 0 34 29.800 L24 47 A23 23 0 0 1 4.100 12.500 Z" fill="#2da94f"/><circle cx="24" cy="24" r="10.500" fill="#fff"/><circle cx="24" cy="24" r="8.500" fill="#4285f4"/></svg>
<div class="t" style="left:378px;top:1769.0px;font-size:24px;line-height:34px;color:#fff;letter-spacing:-0.59px;">Pipelines · GitLab In...</div>
<div class="b" style="left:632px;top:1822px;width:303px;height:4px;background:#6cb0e6;"></div>
<div class="b" style="left:645px;top:1765px;width:44px;height:43px;background:#2a2f36;border-radius:5px;"></div>
<div class="t" style="left:664px;top:1763.0px;font-size:34px;line-height:48px;color:#f2f2f2;letter-spacing:-0.56px;font-weight:700;">R</div>
<div class="t" style="left:648px;top:1780.0px;font-size:20px;line-height:28px;color:#2e74d6;letter-spacing:-1.8px;font-weight:700;">m</div>
<div class="t" style="left:700px;top:1769.0px;font-size:24px;line-height:34px;color:#fff;letter-spacing:-0.17px;">mRemoteNG - con...</div>
<div class="b" style="left:953px;top:1822px;width:304px;height:4px;background:#6cb0e6;"></div>
<svg class="b" style="left:965px;top:1762px;" width="48" height="48" viewBox="0 0 48 48"><path d="M35 2 L46 7 L46 41 L35 46 L12 26 L4 32 L1 30 L1 18 L4 16 L12 22 Z" fill="#2c9ae8"/><path d="M35 2 L46 7 L46 41 L35 46 Z" fill="#3aa9f5"/><path d="M35 14 L22 24 L35 34 Z" fill="#0b1219"/></svg>
<div class="t" style="left:1022px;top:1769.0px;font-size:24px;line-height:34px;color:#fff;letter-spacing:-0.37px;">vlan200.yaml - netz...</div>
<div class="b" style="left:1674px;top:1786px;width:80px;height:16px;border:2px solid #d0d0d0;box-sizing:border-box;border-radius:8px;"></div>
<svg class="b" style="left:2997px;top:1778px;" width="26" height="16" viewBox="0 0 26 16"><path d="M2 14 L13 3 L24 14" fill="none" stroke="#fff" stroke-width="2.600"/></svg>
<svg class="b" style="left:3039px;top:1770px;" width="36" height="32" viewBox="0 0 36 32"><path d="M2 11 L8 11 L15 4 L15 28 L8 21 L2 21 Z" fill="none" stroke="#fff" stroke-width="2"/><path d="M19 11 Q22 16 19 21 M23 7 Q29 16 23 25 M27.500 4 Q35 16 27.500 28" fill="none" stroke="#fff" stroke-width="2"/></svg>
<svg class="b" style="left:3088px;top:1770px;" width="34" height="34" viewBox="0 0 34 34"><rect x="7" y="6" width="25" height="17" fill="none" stroke="#fff" stroke-width="2"/><rect x="1" y="2" width="9" height="9" fill="#0b1219" stroke="#fff" stroke-width="2"/><path d="M19 23 L19 30 M12 30 L27 30" stroke="#fff" stroke-width="2"/></svg>
<div class="t" style="left:3144px;top:1751.0px;font-size:23px;line-height:32px;color:#fff;letter-spacing:0.19px;">11:00 AM</div>
<div class="t" style="left:3141px;top:1787.0px;font-size:23px;line-height:32px;color:#fff;letter-spacing:0.19px;">2/15/2026</div>
<svg class="b" style="left:3279px;top:1762px;" width="50" height="56" viewBox="0 0 50 56"><path d="M3 4 L37 4 L37 30 L12 30 L3 38 Z" fill="#fff"/><path d="M8 11 L32 11 M8 17 L32 17 M8 23 L32 23" stroke="#0b1219" stroke-width="2"/><circle cx="33" cy="39" r="13" fill="#3a3f46" stroke="#0b1219" stroke-width="2"/><text x="33" y="47" text-anchor="middle" font-family="Liberation Sans" font-weight="700" font-size="22" fill="#fff">2</text></svg>
<div class="b" style="left:3354px;top:1746px;width:2px;height:80px;background:#3a4048;"></div>
</body></html>
